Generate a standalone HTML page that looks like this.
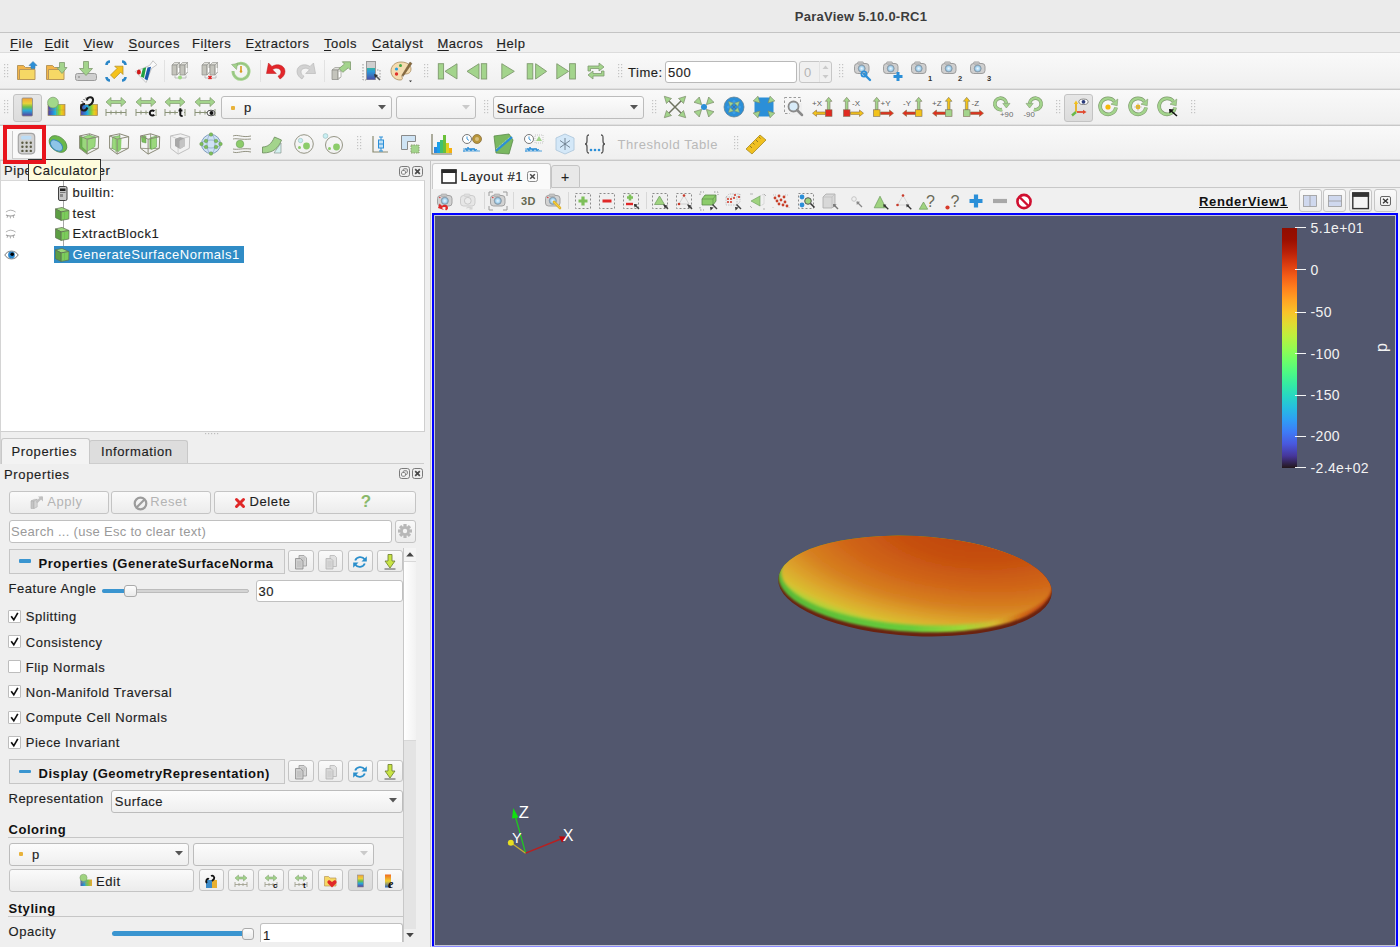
<!DOCTYPE html>
<html><head><meta charset="utf-8"><style>
html,body{margin:0;padding:0;}
body{width:1400px;height:947px;overflow:hidden;position:relative;background:#efefef;font-family:"Liberation Sans", sans-serif;}
div,svg{box-sizing:border-box;}
u{text-decoration:underline;text-decoration-thickness:1px;text-underline-offset:1.5px;}
</style></head><body>
<div style="position:absolute;left:0px;top:0px;width:1400px;height:32px;background:#ebebeb"></div><div style="position:absolute;left:0px;top:32px;width:1400px;height:1px;background:#c4c4c4"></div><div style="position:absolute;left:561px;width:600px;text-align:center;top:9.60px;height:13px;line-height:13px;font-size:13px;font-weight:bold;color:#3c3c3c;letter-spacing:0.25px;white-space:nowrap;">ParaView 5.10.0-RC1</div><div style="position:absolute;left:0px;top:33px;width:1400px;height:19px;background:#efefef"></div><div style="position:absolute;left:0px;top:52px;width:1400px;height:1px;background:#dcdcdc"></div><div style="position:absolute;left:10px;top:36.60px;height:13px;line-height:13px;font-size:13px;font-weight:normal;color:#1e1e1e;letter-spacing:0.55px;white-space:nowrap;-webkit-text-stroke:0.15px #1e1e1e;"><u>F</u>ile</div><div style="position:absolute;left:44.6px;top:36.60px;height:13px;line-height:13px;font-size:13px;font-weight:normal;color:#1e1e1e;letter-spacing:0.55px;white-space:nowrap;-webkit-text-stroke:0.15px #1e1e1e;"><u>E</u>dit</div><div style="position:absolute;left:83.5px;top:36.60px;height:13px;line-height:13px;font-size:13px;font-weight:normal;color:#1e1e1e;letter-spacing:0.55px;white-space:nowrap;-webkit-text-stroke:0.15px #1e1e1e;"><u>V</u>iew</div><div style="position:absolute;left:128.4px;top:36.60px;height:13px;line-height:13px;font-size:13px;font-weight:normal;color:#1e1e1e;letter-spacing:0.55px;white-space:nowrap;-webkit-text-stroke:0.15px #1e1e1e;"><u>S</u>ources</div><div style="position:absolute;left:192px;top:36.60px;height:13px;line-height:13px;font-size:13px;font-weight:normal;color:#1e1e1e;letter-spacing:0.55px;white-space:nowrap;-webkit-text-stroke:0.15px #1e1e1e;">Fi<u>l</u>ters</div><div style="position:absolute;left:245.4px;top:36.60px;height:13px;line-height:13px;font-size:13px;font-weight:normal;color:#1e1e1e;letter-spacing:0.55px;white-space:nowrap;-webkit-text-stroke:0.15px #1e1e1e;">E<u>x</u>tractors</div><div style="position:absolute;left:324px;top:36.60px;height:13px;line-height:13px;font-size:13px;font-weight:normal;color:#1e1e1e;letter-spacing:0.55px;white-space:nowrap;-webkit-text-stroke:0.15px #1e1e1e;"><u>T</u>ools</div><div style="position:absolute;left:372px;top:36.60px;height:13px;line-height:13px;font-size:13px;font-weight:normal;color:#1e1e1e;letter-spacing:0.55px;white-space:nowrap;-webkit-text-stroke:0.15px #1e1e1e;"><u>C</u>atalyst</div><div style="position:absolute;left:437.4px;top:36.60px;height:13px;line-height:13px;font-size:13px;font-weight:normal;color:#1e1e1e;letter-spacing:0.55px;white-space:nowrap;-webkit-text-stroke:0.15px #1e1e1e;"><u>M</u>acros</div><div style="position:absolute;left:496.5px;top:36.60px;height:13px;line-height:13px;font-size:13px;font-weight:normal;color:#1e1e1e;letter-spacing:0.55px;white-space:nowrap;-webkit-text-stroke:0.15px #1e1e1e;"><u>H</u>elp</div><div style="position:absolute;left:0px;top:53px;width:1400px;height:36px;background:linear-gradient(#f9f9f9,#efefef)"></div><div style="position:absolute;left:0px;top:88px;width:1400px;height:1px;background:#e0e0e0"></div><div style="position:absolute;left:0px;top:89px;width:1400px;height:1px;background:#c8c8c8"></div><div style="position:absolute;left:0px;top:90px;width:1400px;height:1px;background:#ffffff"></div><div style="position:absolute;left:0px;top:90px;width:1400px;height:35px;background:linear-gradient(#f9f9f9,#efefef)"></div><div style="position:absolute;left:0px;top:124px;width:1400px;height:1px;background:#e0e0e0"></div><div style="position:absolute;left:0px;top:125px;width:1400px;height:1px;background:#c8c8c8"></div><div style="position:absolute;left:0px;top:126px;width:1400px;height:1px;background:#ffffff"></div><div style="position:absolute;left:0px;top:126px;width:1400px;height:34px;background:linear-gradient(#f9f9f9,#efefef)"></div><div style="position:absolute;left:0px;top:159px;width:1400px;height:1px;background:#e0e0e0"></div><div style="position:absolute;left:0px;top:160px;width:1400px;height:1px;background:#c8c8c8"></div><div style="position:absolute;left:0px;top:161px;width:1400px;height:1px;background:#ffffff"></div><svg style="position:absolute;left:4px;top:64px" width="6" height="15" viewBox="0 0 6 15"><rect x="0" y="0" width="1.2" height="1.2" fill="#c4c4c4"/><rect x="3" y="0" width="1.2" height="1.2" fill="#c4c4c4"/><rect x="0" y="3" width="1.2" height="1.2" fill="#c4c4c4"/><rect x="3" y="3" width="1.2" height="1.2" fill="#c4c4c4"/><rect x="0" y="6" width="1.2" height="1.2" fill="#c4c4c4"/><rect x="3" y="6" width="1.2" height="1.2" fill="#c4c4c4"/><rect x="0" y="9" width="1.2" height="1.2" fill="#c4c4c4"/><rect x="3" y="9" width="1.2" height="1.2" fill="#c4c4c4"/><rect x="0" y="12" width="1.2" height="1.2" fill="#c4c4c4"/><rect x="3" y="12" width="1.2" height="1.2" fill="#c4c4c4"/></svg><svg style="position:absolute;left:14.5px;top:58.5px" width="24" height="24" viewBox="0 0 24 24"><path d="M2.5 20.5V6.5h6l2 2h9v12z" fill="#f3b54a" stroke="#b8975a"/><path d="M4.5 20.5V10.5h15.5v10z" fill="#f6d865" stroke="#b8975a"/><path d="M18 2.5l4 4h-2v3h-4v-3h-2z" fill="#2b8fd8" stroke="#3a7fb0" stroke-width="0.6"/></svg><svg style="position:absolute;left:44.0px;top:58.5px" width="24" height="24" viewBox="0 0 24 24"><path d="M2.5 20.5V6.5h6l2 2h9v12z" fill="#f3b54a" stroke="#b8975a"/><path d="M4.5 20.5V10.5h15.5v10z" fill="#f6d865" stroke="#b8975a"/><path d="M15.5 3.5h5v5h2.5l-5 6l-5-6h2.5z" fill="#a3d48c" stroke="#7f9a6e" stroke-width="0.8"/></svg><svg style="position:absolute;left:74.0px;top:58.5px" width="24" height="24" viewBox="0 0 24 24"><rect x="1.5" y="14.5" width="21" height="7" rx="2" fill="#cfcfcf" stroke="#9b9b9b"/><circle cx="5" cy="18" r="0.8" fill="#777"/><path d="M9.5 2.5h5v7h4l-6.5 7l-6.5-7h4z" fill="#a3d48c" stroke="#7f9a6e" stroke-width="0.8"/></svg><svg style="position:absolute;left:104.0px;top:58.5px" width="24" height="24" viewBox="0 0 24 24"><path d="M2.5 6A3.5 3.5 0 0 1 6 2.5M18 2.5A3.5 3.5 0 0 1 21.5 6M21.5 18A3.5 3.5 0 0 1 18 21.5M6 21.5A3.5 3.5 0 0 1 2.5 18" fill="none" stroke="#2a86c8" stroke-width="2.6"/><path d="M6.5 16l6.5-6.5l-2.3-2.3h8.3v8.3l-2.3-2.3l-6.5 6.5z" fill="#f5c21b" stroke="#b08a20" stroke-width="0.7"/></svg><svg style="position:absolute;left:134.0px;top:58.5px" width="24" height="24" viewBox="0 0 24 24"><path d="M1.3 12.5L12 23.5L17.5 9.5L22.8 5.8L19 1.8L15.5 6.5z" fill="#fafafa" stroke="#c0c0c0" stroke-width="0.9"/><ellipse cx="4.9" cy="13" rx="2" ry="2.6" fill="#d01818"/><path d="M8.8 9.5l3.4-1.2l-2.2 10.6l-3.2-1.5z" fill="#20a040"/><path d="M13.5 8.5l3.6-0.8l-3.6 13.5l-3-1.3z" fill="#1a58a8"/></svg><div style="position:absolute;left:164px;top:60px;width:1px;height:22px;background:#e2e2e2"></div><svg style="position:absolute;left:169.0px;top:58.5px" width="24" height="24" viewBox="0 0 24 24"><path d="M3 6l2.5-2.5h5l-2.5 2.5z" fill="#e2e2dc" stroke="#8f8f8a" stroke-width="0.6"/><path d="M3 6h5v10h-5z" fill="#c4c4bc" stroke="#8f8f8a" stroke-width="0.7"/><path d="M8 6l2.5-2.5v10l-2.5 2.5z" fill="#dcdcd6" stroke="#8f8f8a" stroke-width="0.6"/><path d="M9 9h1.5v4H9z" fill="#fff"/><path d="M11 6l2.5-2.5h5l-2.5 2.5z" fill="#e2e2dc" stroke="#8f8f8a" stroke-width="0.6"/><path d="M11 6h5v10h-5z" fill="#c4c4bc" stroke="#8f8f8a" stroke-width="0.7"/><path d="M16 6l2.5-2.5v10l-2.5 2.5z" fill="#dcdcd6" stroke="#8f8f8a" stroke-width="0.6"/><path d="M17 9h1.5v4H17z" fill="#fff"/><path d="M6 16.5v2.5h11v-2.5" fill="none" stroke="#b8b8b8" stroke-width="0.9"/><circle cx="11" cy="18.5" r="2" fill="#9ed883"/></svg><svg style="position:absolute;left:199.0px;top:58.5px" width="24" height="24" viewBox="0 0 24 24"><path d="M3 6l2.5-2.5h5l-2.5 2.5z" fill="#e2e2dc" stroke="#8f8f8a" stroke-width="0.6"/><path d="M3 6h5v10h-5z" fill="#c4c4bc" stroke="#8f8f8a" stroke-width="0.7"/><path d="M8 6l2.5-2.5v10l-2.5 2.5z" fill="#dcdcd6" stroke="#8f8f8a" stroke-width="0.6"/><path d="M9 9h1.5v4H9z" fill="#fff"/><path d="M11 6l2.5-2.5h5l-2.5 2.5z" fill="#e2e2dc" stroke="#8f8f8a" stroke-width="0.6"/><path d="M11 6h5v10h-5z" fill="#c4c4bc" stroke="#8f8f8a" stroke-width="0.7"/><path d="M16 6l2.5-2.5v10l-2.5 2.5z" fill="#dcdcd6" stroke="#8f8f8a" stroke-width="0.6"/><path d="M17 9h1.5v4H17z" fill="#fff"/><path d="M6 16.5v2.5h11v-2.5" fill="none" stroke="#b8b8b8" stroke-width="0.9"/><path d="M9.5 17l3 3M12.5 17l-3 3" stroke="#e02020" stroke-width="1.6"/></svg><svg style="position:absolute;left:229.0px;top:58.5px" width="24" height="24" viewBox="0 0 24 24"><path d="M6.5 6.5A8 8 0 1 1 4 12" fill="none" stroke="#a3d48c" stroke-width="3"/><path d="M6.5 6.5A8 8 0 1 1 4 12" fill="none" stroke="#7f9a6e" stroke-width="0.4"/><path d="M2.5 5.5l6 -1l-1 6z" fill="#a3d48c" stroke="#7f9a6e" stroke-width="0.5"/><path d="M12 7v5" stroke="#d99a20" stroke-width="1.6"/><circle cx="12" cy="12.5" r="1.3" fill="#d99a20"/></svg><div style="position:absolute;left:260px;top:60px;width:1px;height:22px;background:#e2e2e2"></div><svg style="position:absolute;left:264.0px;top:58.5px" width="24" height="24" viewBox="0 0 24 24"><path d="M2.5 14.5L4.5 4l3.5 3.5c5-3.5 13-1.5 13 5c0 3.5-2.5 6-5 7.5l-2-2.8c1.8-1 3-2.5 3-4.3c0-3.5-5-5-8.5-2.2l3.8 3.8z" fill="#e3262b" stroke="#b81818" stroke-width="0.5"/></svg><svg style="position:absolute;left:294.0px;top:58.5px" width="24" height="24" viewBox="0 0 24 24"><path d="M21.5 14.5L19.5 4l-3.5 3.5c-5-3.5-13-1.5-13 5c0 3.5 2.5 6 5 7.5l2-2.8c-1.8-1-3-2.5-3-4.3c0-3.5 5-5 8.5-2.2l-3.8 3.8z" fill="#d2d2d2" stroke="#b4b4b4" stroke-width="0.6"/></svg><div style="position:absolute;left:324px;top:60px;width:1px;height:22px;background:#e2e2e2"></div><svg style="position:absolute;left:329.0px;top:58.5px" width="24" height="24" viewBox="0 0 24 24"><path d="M3 11l3-2.5h6l-3 2.5z" fill="#e0e0da" stroke="#8a8a84" stroke-width="0.6"/><path d="M3 11h6v9.5h-6z" fill="#c4c4bc" stroke="#8a8a84" stroke-width="0.7"/><path d="M9 11l3-2.5v9.5l-3 2.5z" fill="#dadad4" stroke="#8a8a84" stroke-width="0.6"/><rect x="9.8" y="13" width="1.6" height="5" fill="#fff"/><path d="M10 9.5l5.5-4.5l-2.2-2.2h8.2v8.2l-2.2-2.2l-5.5 4.5z" fill="#a3d48c" stroke="#7f9a6e" stroke-width="0.8"/></svg><svg style="position:absolute;left:359.0px;top:58.5px" width="24" height="24" viewBox="0 0 24 24"><rect x="7.5" y="2.5" width="9" height="18" fill="#cfcfcf" stroke="#9a9a9a"/><rect x="8" y="9" width="8" height="11.5" fill="url(#tank)"/><path d="M4 5v16h3M18 11h3v8" fill="none" stroke="#999" stroke-dasharray="1.5 1.5"/><path d="M16 16l5 5" stroke="#555" stroke-width="1.6"/><path d="M15 15l4 1l-3 3z" fill="#333"/><defs><linearGradient id="tank" x1="0" y1="0" x2="0" y2="1"><stop offset="0" stop-color="#36b3a0"/><stop offset="0.3" stop-color="#2d9ad8"/><stop offset="1" stop-color="#4a4fa8"/></linearGradient></defs></svg><svg style="position:absolute;left:389.0px;top:58.5px" width="24" height="24" viewBox="0 0 24 24"><path d="M12 3c-6 0-10 4-10 9c0 5 4 9 9 9c2 0 3-1 2-3c-1-2 1-3 3-3c3 0 6-1 6-5c0-4-4-7-10-7z" fill="#f4dcb0" stroke="#a88a5a" stroke-width="0.8"/><circle cx="7.5" cy="10" r="1.6" fill="#2b9fe0"/><circle cx="11.5" cy="6.5" r="1.5" fill="#44a844"/><circle cx="7.5" cy="15" r="1.7" fill="#e0302a"/><path d="M21 3l-8 13l1 1.5l9-13z" fill="#8a6a3a" stroke="#6a5a40" stroke-width="0.5"/><path d="M20 21.5l3 0l-1.5 1.8z" fill="#333"/></svg><svg style="position:absolute;left:424px;top:64px" width="6" height="15" viewBox="0 0 6 15"><rect x="0" y="0" width="1.2" height="1.2" fill="#c4c4c4"/><rect x="3" y="0" width="1.2" height="1.2" fill="#c4c4c4"/><rect x="0" y="3" width="1.2" height="1.2" fill="#c4c4c4"/><rect x="3" y="3" width="1.2" height="1.2" fill="#c4c4c4"/><rect x="0" y="6" width="1.2" height="1.2" fill="#c4c4c4"/><rect x="3" y="6" width="1.2" height="1.2" fill="#c4c4c4"/><rect x="0" y="9" width="1.2" height="1.2" fill="#c4c4c4"/><rect x="3" y="9" width="1.2" height="1.2" fill="#c4c4c4"/><rect x="0" y="12" width="1.2" height="1.2" fill="#c4c4c4"/><rect x="3" y="12" width="1.2" height="1.2" fill="#c4c4c4"/></svg><svg style="position:absolute;left:435.0px;top:58.5px" width="24" height="24" viewBox="0 0 24 24"><rect x="3.3" y="4.7" width="5.3" height="15.3" fill="#a3d48c" stroke="#7f9a6e" stroke-width="0.9"/><path d="M10 12.35l12-7.6v15.2z" fill="#a3d48c" stroke="#7f9a6e" stroke-width="0.9"/></svg><svg style="position:absolute;left:465.0px;top:58.5px" width="24" height="24" viewBox="0 0 24 24"><path d="M2 12.35l12-7.6v15.2z" fill="#a3d48c" stroke="#7f9a6e" stroke-width="0.9"/><rect x="16.3" y="4.7" width="5.4" height="15.3" fill="#a3d48c" stroke="#7f9a6e" stroke-width="0.9"/></svg><svg style="position:absolute;left:496.0px;top:58.5px" width="24" height="24" viewBox="0 0 24 24"><path d="M5.8 4.7l12.5 7.65l-12.5 7.65z" fill="#a3d48c" stroke="#7f9a6e" stroke-width="0.9"/></svg><svg style="position:absolute;left:525.0px;top:58.5px" width="24" height="24" viewBox="0 0 24 24"><rect x="2.2" y="4.7" width="5.6" height="15.3" fill="#a3d48c" stroke="#7f9a6e" stroke-width="0.9"/><path d="M10.6 4.7l11 7.65l-11 7.65z" fill="#a3d48c" stroke="#7f9a6e" stroke-width="0.9"/></svg><svg style="position:absolute;left:554.0px;top:58.5px" width="24" height="24" viewBox="0 0 24 24"><path d="M2.8 4.7l11.8 7.65l-11.8 7.65z" fill="#a3d48c" stroke="#7f9a6e" stroke-width="0.9"/><rect x="15.6" y="4.7" width="5.8" height="15.3" fill="#a3d48c" stroke="#7f9a6e" stroke-width="0.9"/></svg><svg style="position:absolute;left:584.0px;top:58.5px" width="24" height="24" viewBox="0 0 24 24"><path d="M4 12V7h11V4l5 4l-5 4V9.5H6.5V12z" fill="#a3d48c" stroke="#7f9a6e" stroke-width="0.8"/><path d="M20 12v5H9v3l-5-4l5-4v2.5h8.5V12z" fill="#a3d48c" stroke="#7f9a6e" stroke-width="0.8"/></svg><svg style="position:absolute;left:618px;top:64px" width="6" height="15" viewBox="0 0 6 15"><rect x="0" y="0" width="1.2" height="1.2" fill="#c4c4c4"/><rect x="3" y="0" width="1.2" height="1.2" fill="#c4c4c4"/><rect x="0" y="3" width="1.2" height="1.2" fill="#c4c4c4"/><rect x="3" y="3" width="1.2" height="1.2" fill="#c4c4c4"/><rect x="0" y="6" width="1.2" height="1.2" fill="#c4c4c4"/><rect x="3" y="6" width="1.2" height="1.2" fill="#c4c4c4"/><rect x="0" y="9" width="1.2" height="1.2" fill="#c4c4c4"/><rect x="3" y="9" width="1.2" height="1.2" fill="#c4c4c4"/><rect x="0" y="12" width="1.2" height="1.2" fill="#c4c4c4"/><rect x="3" y="12" width="1.2" height="1.2" fill="#c4c4c4"/></svg><div style="position:absolute;left:628px;top:65.75px;height:13px;line-height:13px;font-size:13px;font-weight:normal;color:#1e1e1e;letter-spacing:0.55px;white-space:nowrap;-webkit-text-stroke:0.15px #1e1e1e;">Time:</div><div style="position:absolute;left:664.5px;top:60.5px;width:132px;height:22px;background:#fff;border:1px solid #b9b9b9;border-radius:3px"></div><div style="position:absolute;left:668px;top:65.75px;height:13px;line-height:13px;font-size:13px;font-weight:normal;color:#1e1e1e;letter-spacing:0.5px;white-space:nowrap;-webkit-text-stroke:0.15px #1e1e1e;">500</div><div style="position:absolute;left:798.5px;top:60.5px;width:33px;height:22px;background:#f0f0f0;border:1px solid #c6c6c6;border-radius:3px"></div><div style="position:absolute;left:819px;top:61px;width:1px;height:21px;background:#e2e2e2"></div><div style="position:absolute;left:804px;top:65.75px;height:13px;line-height:13px;font-size:13px;font-weight:normal;color:#b4b4b4;letter-spacing:0px;white-space:nowrap;">0</div><svg style="position:absolute;left:820px;top:62px" width="11" height="20" viewBox="0 0 11 20"><path d="M2.5 7l3-3.5L8.5 7z" fill="#cacaca"/><path d="M2.5 13l3 3.5L8.5 13z" fill="#cacaca"/></svg><svg style="position:absolute;left:839px;top:64px" width="6" height="15" viewBox="0 0 6 15"><rect x="0" y="0" width="1.2" height="1.2" fill="#c4c4c4"/><rect x="3" y="0" width="1.2" height="1.2" fill="#c4c4c4"/><rect x="0" y="3" width="1.2" height="1.2" fill="#c4c4c4"/><rect x="3" y="3" width="1.2" height="1.2" fill="#c4c4c4"/><rect x="0" y="6" width="1.2" height="1.2" fill="#c4c4c4"/><rect x="3" y="6" width="1.2" height="1.2" fill="#c4c4c4"/><rect x="0" y="9" width="1.2" height="1.2" fill="#c4c4c4"/><rect x="3" y="9" width="1.2" height="1.2" fill="#c4c4c4"/><rect x="0" y="12" width="1.2" height="1.2" fill="#c4c4c4"/><rect x="3" y="12" width="1.2" height="1.2" fill="#c4c4c4"/></svg><svg style="position:absolute;left:851.0px;top:58.5px" width="24" height="24" viewBox="0 0 24 24"><g transform="translate(2,-1)"><defs><radialGradient id="lens1"><stop offset="0" stop-color="#eef8ff"/><stop offset="0.6" stop-color="#a8d4f0"/><stop offset="1" stop-color="#7a9ab0"/></radialGradient></defs><rect x="1.5" y="5.5" width="14.5" height="10" rx="3" fill="#cfcfcf" stroke="#959595" stroke-width="0.9"/><rect x="4.5" y="3.8" width="6" height="2.5" rx="1" fill="#c0c0c0" stroke="#9e9e9e" stroke-width="0.6"/><circle cx="8.7" cy="10.5" r="3.5" fill="url(#lens1)" stroke="#8a9aa8" stroke-width="0.8"/></g><path d="M13 15l6 6" stroke="#2b8fd8" stroke-width="2.4" stroke-linecap="round"/><circle cx="13" cy="15" r="2.6" fill="none" stroke="#2b8fd8" stroke-width="1.8"/></svg><svg style="position:absolute;left:880.0px;top:58.5px" width="24" height="24" viewBox="0 0 24 24"><g transform="translate(2,-1)"><defs><radialGradient id="lens1"><stop offset="0" stop-color="#eef8ff"/><stop offset="0.6" stop-color="#a8d4f0"/><stop offset="1" stop-color="#7a9ab0"/></radialGradient></defs><rect x="1.5" y="5.5" width="14.5" height="10" rx="3" fill="#cfcfcf" stroke="#959595" stroke-width="0.9"/><rect x="4.5" y="3.8" width="6" height="2.5" rx="1" fill="#c0c0c0" stroke="#9e9e9e" stroke-width="0.6"/><circle cx="8.7" cy="10.5" r="3.5" fill="url(#lens1)" stroke="#8a9aa8" stroke-width="0.8"/></g><path d="M18 13v9M13.5 17.5h9" stroke="#2b8fd8" stroke-width="3"/></svg><svg style="position:absolute;left:909.0px;top:58.5px" width="24" height="24" viewBox="0 0 24 24"><g transform="translate(1,-1)"><defs><radialGradient id="lens1"><stop offset="0" stop-color="#eef8ff"/><stop offset="0.6" stop-color="#a8d4f0"/><stop offset="1" stop-color="#7a9ab0"/></radialGradient></defs><rect x="1.5" y="5.5" width="14.5" height="10" rx="3" fill="#cfcfcf" stroke="#959595" stroke-width="0.9"/><rect x="4.5" y="3.8" width="6" height="2.5" rx="1" fill="#c0c0c0" stroke="#9e9e9e" stroke-width="0.6"/><circle cx="8.7" cy="10.5" r="3.5" fill="url(#lens1)" stroke="#8a9aa8" stroke-width="0.8"/></g><text x="19" y="21.5" font-family="Liberation Sans" font-weight="bold" font-size="7.5" fill="#333">1</text></svg><svg style="position:absolute;left:939.0px;top:58.5px" width="24" height="24" viewBox="0 0 24 24"><g transform="translate(1,-1)"><defs><radialGradient id="lens1"><stop offset="0" stop-color="#eef8ff"/><stop offset="0.6" stop-color="#a8d4f0"/><stop offset="1" stop-color="#7a9ab0"/></radialGradient></defs><rect x="1.5" y="5.5" width="14.5" height="10" rx="3" fill="#cfcfcf" stroke="#959595" stroke-width="0.9"/><rect x="4.5" y="3.8" width="6" height="2.5" rx="1" fill="#c0c0c0" stroke="#9e9e9e" stroke-width="0.6"/><circle cx="8.7" cy="10.5" r="3.5" fill="url(#lens1)" stroke="#8a9aa8" stroke-width="0.8"/></g><text x="19" y="21.5" font-family="Liberation Sans" font-weight="bold" font-size="7.5" fill="#333">2</text></svg><svg style="position:absolute;left:968.0px;top:58.5px" width="24" height="24" viewBox="0 0 24 24"><g transform="translate(1,-1)"><defs><radialGradient id="lens1"><stop offset="0" stop-color="#eef8ff"/><stop offset="0.6" stop-color="#a8d4f0"/><stop offset="1" stop-color="#7a9ab0"/></radialGradient></defs><rect x="1.5" y="5.5" width="14.5" height="10" rx="3" fill="#cfcfcf" stroke="#959595" stroke-width="0.9"/><rect x="4.5" y="3.8" width="6" height="2.5" rx="1" fill="#c0c0c0" stroke="#9e9e9e" stroke-width="0.6"/><circle cx="8.7" cy="10.5" r="3.5" fill="url(#lens1)" stroke="#8a9aa8" stroke-width="0.8"/></g><text x="19" y="21.5" font-family="Liberation Sans" font-weight="bold" font-size="7.5" fill="#333">3</text></svg><svg style="position:absolute;left:4px;top:100px" width="6" height="15" viewBox="0 0 6 15"><rect x="0" y="0" width="1.2" height="1.2" fill="#c4c4c4"/><rect x="3" y="0" width="1.2" height="1.2" fill="#c4c4c4"/><rect x="0" y="3" width="1.2" height="1.2" fill="#c4c4c4"/><rect x="3" y="3" width="1.2" height="1.2" fill="#c4c4c4"/><rect x="0" y="6" width="1.2" height="1.2" fill="#c4c4c4"/><rect x="3" y="6" width="1.2" height="1.2" fill="#c4c4c4"/><rect x="0" y="9" width="1.2" height="1.2" fill="#c4c4c4"/><rect x="3" y="9" width="1.2" height="1.2" fill="#c4c4c4"/><rect x="0" y="12" width="1.2" height="1.2" fill="#c4c4c4"/><rect x="3" y="12" width="1.2" height="1.2" fill="#c4c4c4"/></svg><div style="position:absolute;left:12.5px;top:93.5px;width:29px;height:28px;background:linear-gradient(#e6e6e6,#dcdcdc);border:1px solid #c3c3c3;border-radius:3px"></div><svg style="position:absolute;left:14.7px;top:95.0px" width="24" height="24" viewBox="0 0 24 24"><defs><linearGradient id="cbg" x1="0" y1="0" x2="0" y2="1"><stop offset="0" stop-color="#f4a13a"/><stop offset="0.3" stop-color="#e8d23a"/><stop offset="0.5" stop-color="#6cc04a"/><stop offset="0.7" stop-color="#2aa8d8"/><stop offset="1" stop-color="#5a3c9a"/></linearGradient></defs><rect x="7" y="3" width="10.5" height="18" rx="1" fill="url(#cbg)" stroke="#8a8a8a" stroke-width="0.8"/></svg><svg style="position:absolute;left:44.5px;top:95.0px" width="24" height="24" viewBox="0 0 24 24"><defs><linearGradient id="grd" x1="0" y1="0" x2="1" y2="0"><stop offset="0" stop-color="#5a3c9c"/><stop offset="0.28" stop-color="#2a86d6"/><stop offset="0.45" stop-color="#22bcd8"/><stop offset="0.62" stop-color="#78d040"/><stop offset="0.8" stop-color="#e6d01e"/><stop offset="1" stop-color="#f0a028"/></linearGradient></defs><rect x="3" y="9.5" width="17" height="11" fill="url(#grd)" stroke="#9a8a58" stroke-width="0.7"/><path d="M3 15h17M11.5 9.5v11" stroke="#a89048" stroke-width="0.5" stroke-opacity="0.7"/><circle cx="8" cy="7.6" r="5.4" fill="#a2d88a" stroke="#7a9a6a" stroke-width="0.7"/></svg><svg style="position:absolute;left:74.5px;top:95.0px" width="24" height="24" viewBox="0 0 24 24"><defs><linearGradient id="grd2" x1="0" y1="0" x2="1" y2="0"><stop offset="0" stop-color="#5a3c9c"/><stop offset="0.28" stop-color="#2a86d6"/><stop offset="0.45" stop-color="#22bcd8"/><stop offset="0.62" stop-color="#78d040"/><stop offset="0.8" stop-color="#e6d01e"/><stop offset="1" stop-color="#f0a028"/></linearGradient></defs><rect x="5.5" y="9.5" width="17" height="11" fill="url(#grd2)" stroke="#9a8a58" stroke-width="0.7"/><path d="M5.5 15h17M14 9.5v11" stroke="#a89048" stroke-width="0.5" stroke-opacity="0.7"/><path d="M13.5 10.5C19 9 19.5 2 15 2.2C13 2.3 11.8 3.8 12 5.5M10 9C5.5 8.5 4.5 15 8.5 15.5C10.5 15.8 11.8 14 12.5 12.5" fill="none" stroke="#1a1a1a" stroke-width="2.1"/><path d="M8.5 4l1.5 1.5M6.5 6.5l2 .8M11 2.5l.3 2" stroke="#333" stroke-width="0.9"/></svg><svg style="position:absolute;left:104.3px;top:95.0px" width="24" height="24" viewBox="0 0 24 24"><path d="M2 7l5-4.5v3h10v-3l5 4.5l-5 4.5v-3H7v3z" fill="#a3d48c" stroke="#7f9a6e" stroke-width="0.7"/><path d="M2 14v7M2 17.5h20M22 14v7M7 15.5v4M12 15.5v4M17 15.5v4" stroke="#8a9278" stroke-width="1"/></svg><svg style="position:absolute;left:133.8px;top:95.0px" width="24" height="24" viewBox="0 0 24 24"><path d="M2 7l5-4.5v3h10v-3l5 4.5l-5 4.5v-3H7v3z" fill="#a3d48c" stroke="#7f9a6e" stroke-width="0.7"/><path d="M2 14v7M2 17.5h20M22 14v7M7 15.5v4M12 15.5v4M17 15.5v4" stroke="#8a9278" stroke-width="1"/><circle cx="18" cy="18" r="3.6" fill="#f2f2f2"/><path d="M20.3 16.2A2.6 2.6 0 1 0 20.3 19.8" fill="none" stroke="#151515" stroke-width="2"/></svg><svg style="position:absolute;left:163.3px;top:95.0px" width="24" height="24" viewBox="0 0 24 24"><path d="M2 7l5-4.5v3h10v-3l5 4.5l-5 4.5v-3H7v3z" fill="#a3d48c" stroke="#7f9a6e" stroke-width="0.7"/><path d="M2 14v7M2 17.5h20M22 14v7M7 15.5v4M12 15.5v4M17 15.5v4" stroke="#8a9278" stroke-width="1"/><rect x="15" y="13" width="6" height="9" fill="#f2f2f2"/><path d="M17.3 13.2v6.3c0 1.2 .8 1.6 2.3 1.5M15.6 15.6h3.8" fill="none" stroke="#151515" stroke-width="2"/></svg><svg style="position:absolute;left:193.3px;top:95.0px" width="24" height="24" viewBox="0 0 24 24"><path d="M2 7l5-4.5v3h10v-3l5 4.5l-5 4.5v-3H7v3z" fill="#a3d48c" stroke="#7f9a6e" stroke-width="0.7"/><path d="M2 14v7M2 17.5h20M22 14v7M7 15.5v4M12 15.5v4M17 15.5v4" stroke="#8a9278" stroke-width="1"/><ellipse cx="18" cy="18" rx="4" ry="2.8" fill="#fff" stroke="#222" stroke-width="0.8"/><circle cx="18.5" cy="18" r="2" fill="#111"/></svg><div style="position:absolute;left:220.5px;top:96px;width:171.0px;height:23px;background:linear-gradient(#fcfcfc,#efefef);border:1px solid #bcbcbc;border-radius:3px"></div><svg style="position:absolute;left:377.5px;top:104.5px" width="8" height="5" viewBox="0 0 8 5"><path d="M0 0h8l-4 4.5z" fill="#555"/></svg><div style="position:absolute;left:231.0px;top:105.5px;width:4px;height:4px;background:#e8b23a;border-radius:1px"></div><div style="position:absolute;left:244.0px;top:101.30px;height:13px;line-height:13px;font-size:13px;font-weight:normal;color:#1e1e1e;letter-spacing:0.5px;white-space:nowrap;-webkit-text-stroke:0.15px #1e1e1e;">p</div><div style="position:absolute;left:396px;top:96px;width:79.5px;height:23px;background:linear-gradient(#fcfcfc,#efefef);border:1px solid #bcbcbc;border-radius:3px"></div><svg style="position:absolute;left:461.5px;top:104.5px" width="8" height="5" viewBox="0 0 8 5"><path d="M0 0h8l-4 4.5z" fill="#cacaca"/></svg><svg style="position:absolute;left:484px;top:100px" width="6" height="15" viewBox="0 0 6 15"><rect x="0" y="0" width="1.2" height="1.2" fill="#c4c4c4"/><rect x="3" y="0" width="1.2" height="1.2" fill="#c4c4c4"/><rect x="0" y="3" width="1.2" height="1.2" fill="#c4c4c4"/><rect x="3" y="3" width="1.2" height="1.2" fill="#c4c4c4"/><rect x="0" y="6" width="1.2" height="1.2" fill="#c4c4c4"/><rect x="3" y="6" width="1.2" height="1.2" fill="#c4c4c4"/><rect x="0" y="9" width="1.2" height="1.2" fill="#c4c4c4"/><rect x="3" y="9" width="1.2" height="1.2" fill="#c4c4c4"/><rect x="0" y="12" width="1.2" height="1.2" fill="#c4c4c4"/><rect x="3" y="12" width="1.2" height="1.2" fill="#c4c4c4"/></svg><div style="position:absolute;left:492.5px;top:96px;width:151.0px;height:23px;background:linear-gradient(#fcfcfc,#efefef);border:1px solid #bcbcbc;border-radius:3px"></div><svg style="position:absolute;left:629.5px;top:104.5px" width="8" height="5" viewBox="0 0 8 5"><path d="M0 0h8l-4 4.5z" fill="#555"/></svg><div style="position:absolute;left:496.8px;top:102.10px;height:13px;line-height:13px;font-size:13px;font-weight:normal;color:#1e1e1e;letter-spacing:0.5px;white-space:nowrap;-webkit-text-stroke:0.15px #1e1e1e;">Surface</div><svg style="position:absolute;left:652px;top:100px" width="6" height="15" viewBox="0 0 6 15"><rect x="0" y="0" width="1.2" height="1.2" fill="#c4c4c4"/><rect x="3" y="0" width="1.2" height="1.2" fill="#c4c4c4"/><rect x="0" y="3" width="1.2" height="1.2" fill="#c4c4c4"/><rect x="3" y="3" width="1.2" height="1.2" fill="#c4c4c4"/><rect x="0" y="6" width="1.2" height="1.2" fill="#c4c4c4"/><rect x="3" y="6" width="1.2" height="1.2" fill="#c4c4c4"/><rect x="0" y="9" width="1.2" height="1.2" fill="#c4c4c4"/><rect x="3" y="9" width="1.2" height="1.2" fill="#c4c4c4"/><rect x="0" y="12" width="1.2" height="1.2" fill="#c4c4c4"/><rect x="3" y="12" width="1.2" height="1.2" fill="#c4c4c4"/></svg><svg style="position:absolute;left:663.0px;top:95.0px" width="24" height="24" viewBox="0 0 24 24"><path d="M4 4L20 20M20 4L4 20" stroke="#6f7360" stroke-width="1.5"/><g transform="translate(1.3 1.3) rotate(0)"><path d="M0 0L7.2 2.2L4.6 4.6L2.2 7.2Z" fill="#a3d48c" stroke="#7a8a68" stroke-width="0.7" stroke-linejoin="round"/></g><g transform="translate(22.7 1.3) rotate(90)"><path d="M0 0L7.2 2.2L4.6 4.6L2.2 7.2Z" fill="#a3d48c" stroke="#7a8a68" stroke-width="0.7" stroke-linejoin="round"/></g><g transform="translate(22.7 22.7) rotate(180)"><path d="M0 0L7.2 2.2L4.6 4.6L2.2 7.2Z" fill="#a3d48c" stroke="#7a8a68" stroke-width="0.7" stroke-linejoin="round"/></g><g transform="translate(1.3 22.7) rotate(270)"><path d="M0 0L7.2 2.2L4.6 4.6L2.2 7.2Z" fill="#a3d48c" stroke="#7a8a68" stroke-width="0.7" stroke-linejoin="round"/></g></svg><svg style="position:absolute;left:692.3px;top:95.0px" width="24" height="24" viewBox="0 0 24 24"><circle cx="12" cy="12" r="3" fill="#2b8fd8"/><g transform="translate(9.6 9.6) rotate(180) scale(1.05)"><path d="M0 0L7.2 2.2L4.6 4.6L2.2 7.2Z" fill="#a3d48c" stroke="#7a8a68" stroke-width="0.7" stroke-linejoin="round"/></g><g transform="translate(14.4 9.6) rotate(270) scale(1.05)"><path d="M0 0L7.2 2.2L4.6 4.6L2.2 7.2Z" fill="#a3d48c" stroke="#7a8a68" stroke-width="0.7" stroke-linejoin="round"/></g><g transform="translate(14.4 14.4) rotate(0) scale(1.05)"><path d="M0 0L7.2 2.2L4.6 4.6L2.2 7.2Z" fill="#a3d48c" stroke="#7a8a68" stroke-width="0.7" stroke-linejoin="round"/></g><g transform="translate(9.6 14.4) rotate(90) scale(1.05)"><path d="M0 0L7.2 2.2L4.6 4.6L2.2 7.2Z" fill="#a3d48c" stroke="#7a8a68" stroke-width="0.7" stroke-linejoin="round"/></g></svg><svg style="position:absolute;left:722.2px;top:95.0px" width="24" height="24" viewBox="0 0 24 24"><circle cx="12" cy="12" r="10" fill="#2b8fd8" stroke="#5a7a8a" stroke-width="0.7"/><path d="M7 7L17 17M17 7L7 17" stroke="#4a7090" stroke-width="0.8"/><circle cx="12" cy="6.5" r="1.5" fill="#3aa0e8"/><circle cx="12" cy="17.5" r="1.5" fill="#3aa0e8"/><circle cx="6.5" cy="12" r="1.5" fill="#3aa0e8"/><circle cx="17.5" cy="12" r="1.5" fill="#3aa0e8"/><g transform="translate(6.5 6.5) rotate(0) scale(0.7)"><path d="M0 0L7.2 2.2L4.6 4.6L2.2 7.2Z" fill="#a3d48c" stroke="#7a8a68" stroke-width="0.7" stroke-linejoin="round"/></g><g transform="translate(17.5 6.5) rotate(90) scale(0.7)"><path d="M0 0L7.2 2.2L4.6 4.6L2.2 7.2Z" fill="#a3d48c" stroke="#7a8a68" stroke-width="0.7" stroke-linejoin="round"/></g><g transform="translate(17.5 17.5) rotate(180) scale(0.7)"><path d="M0 0L7.2 2.2L4.6 4.6L2.2 7.2Z" fill="#a3d48c" stroke="#7a8a68" stroke-width="0.7" stroke-linejoin="round"/></g><g transform="translate(6.5 17.5) rotate(270) scale(0.7)"><path d="M0 0L7.2 2.2L4.6 4.6L2.2 7.2Z" fill="#a3d48c" stroke="#7a8a68" stroke-width="0.7" stroke-linejoin="round"/></g></svg><svg style="position:absolute;left:752.0px;top:95.0px" width="24" height="24" viewBox="0 0 24 24"><rect x="2.5" y="2.5" width="19" height="19" rx="4.5" fill="#2b8fd8"/><g transform="translate(8 8) rotate(180) scale(0.95)"><path d="M0 0L7.2 2.2L4.6 4.6L2.2 7.2Z" fill="#a3d48c" stroke="#7a8a68" stroke-width="0.7" stroke-linejoin="round"/></g><g transform="translate(16 8) rotate(270) scale(0.95)"><path d="M0 0L7.2 2.2L4.6 4.6L2.2 7.2Z" fill="#a3d48c" stroke="#7a8a68" stroke-width="0.7" stroke-linejoin="round"/></g><g transform="translate(16 16) rotate(0) scale(0.95)"><path d="M0 0L7.2 2.2L4.6 4.6L2.2 7.2Z" fill="#a3d48c" stroke="#7a8a68" stroke-width="0.7" stroke-linejoin="round"/></g><g transform="translate(8 16) rotate(90) scale(0.95)"><path d="M0 0L7.2 2.2L4.6 4.6L2.2 7.2Z" fill="#a3d48c" stroke="#7a8a68" stroke-width="0.7" stroke-linejoin="round"/></g></svg><svg style="position:absolute;left:781.8px;top:95.0px" width="24" height="24" viewBox="0 0 24 24"><rect x="2.5" y="2.5" width="16" height="16" fill="none" stroke="#9a9a9a" stroke-dasharray="2.5 2"/><rect x="8" y="8" width="12" height="12" fill="#efefef"/><circle cx="11.5" cy="11.5" r="5" fill="#d8ecfa" stroke="#8a8a8a" stroke-width="1.8"/><path d="M15 15l5 5" stroke="#8a8a8a" stroke-width="2.5" stroke-linecap="round"/></svg><svg style="position:absolute;left:811.3px;top:95.0px" width="24" height="24" viewBox="0 0 24 24"><path d="M17.7 2.3l3.3 4h-2v8.5h-2.6v-8.5h-2z" fill="#a3d48c" stroke="#7a7a60" stroke-width="0.6"/><path d="M1.5 18.2l4-3.2v2h9v2.4h-9v2z" fill="#f2c21a" stroke="#8a6a40" stroke-width="0.6"/><rect x="14.5" y="14.8" width="6.5" height="6.5" fill="#e02a20" stroke="#7a6a50" stroke-width="0.6"/><text x="1" y="11.3" font-family="Liberation Sans" font-size="8" fill="#5a5a5a">+X</text></svg><svg style="position:absolute;left:841.0px;top:95.0px" width="24" height="24" viewBox="0 0 24 24"><path d="M5.7 2.3l3.3 4h-2v8.5h-2.6v-8.5h-2z" fill="#a3d48c" stroke="#7a7a60" stroke-width="0.6"/><path d="M22.5 18.2l-4-3.2v2h-9v2.4h9v2z" fill="#f2c21a" stroke="#8a6a40" stroke-width="0.6"/><rect x="2.5" y="14.8" width="6.5" height="6.5" fill="#e02a20" stroke="#7a6a50" stroke-width="0.6"/><text x="11" y="11.3" font-family="Liberation Sans" font-size="8" fill="#5a5a5a">-X</text></svg><svg style="position:absolute;left:871.3px;top:95.0px" width="24" height="24" viewBox="0 0 24 24"><path d="M5.7 2.3l3.3 4h-2v8.5h-2.6v-8.5h-2z" fill="#a3d48c" stroke="#7a7a60" stroke-width="0.6"/><path d="M22.5 18.2l-4-3.2v2h-9v2.4h9v2z" fill="#e0301e" stroke="#8a6a40" stroke-width="0.6"/><rect x="2.5" y="14.8" width="6.5" height="6.5" fill="#f2c21a" stroke="#7a6a50" stroke-width="0.6"/><text x="9.5" y="11.3" font-family="Liberation Sans" font-size="8" fill="#5a5a5a">+Y</text></svg><svg style="position:absolute;left:901.0px;top:95.0px" width="24" height="24" viewBox="0 0 24 24"><path d="M17.7 2.3l3.3 4h-2v8.5h-2.6v-8.5h-2z" fill="#a3d48c" stroke="#7a7a60" stroke-width="0.6"/><path d="M1.5 18.2l4-3.2v2h9v2.4h-9v2z" fill="#e0301e" stroke="#8a6a40" stroke-width="0.6"/><rect x="14.5" y="14.8" width="6.5" height="6.5" fill="#f2c21a" stroke="#7a6a50" stroke-width="0.6"/><text x="2" y="11.3" font-family="Liberation Sans" font-size="8" fill="#5a5a5a">-Y</text></svg><svg style="position:absolute;left:930.7px;top:95.0px" width="24" height="24" viewBox="0 0 24 24"><path d="M17.7 2.3l3.3 4h-2v8.5h-2.6v-8.5h-2z" fill="#f2c21a" stroke="#7a7a60" stroke-width="0.6"/><path d="M1.5 18.2l4-3.2v2h9v2.4h-9v2z" fill="#e0301e" stroke="#8a6a40" stroke-width="0.6"/><rect x="14.5" y="14.8" width="6.5" height="6.5" fill="#a3d48c" stroke="#7a6a50" stroke-width="0.6"/><text x="1" y="11.3" font-family="Liberation Sans" font-size="8" fill="#5a5a5a">+Z</text></svg><svg style="position:absolute;left:960.6px;top:95.0px" width="24" height="24" viewBox="0 0 24 24"><path d="M5.7 2.3l3.3 4h-2v8.5h-2.6v-8.5h-2z" fill="#f2c21a" stroke="#7a7a60" stroke-width="0.6"/><path d="M22.5 18.2l-4-3.2v2h-9v2.4h9v2z" fill="#e0301e" stroke="#8a6a40" stroke-width="0.6"/><rect x="2.5" y="14.8" width="6.5" height="6.5" fill="#a3d48c" stroke="#7a6a50" stroke-width="0.6"/><text x="10.5" y="11.3" font-family="Liberation Sans" font-size="8" fill="#5a5a5a">-Z</text></svg><svg style="position:absolute;left:990.5px;top:95.0px" width="24" height="24" viewBox="0 0 24 24"><path d="M11.10 14.50A5.8 5.8 0 1 1 15.38 8.39" fill="none" stroke="#7f9a6e" stroke-width="3.6"/><path d="M11.10 14.50A5.8 5.8 0 1 1 15.38 8.39" fill="none" stroke="#a3d48c" stroke-width="2.4"/><path d="M11.80 8.40h7.2l-3.6 4.6z" fill="#a3d48c" stroke="#7f9a6e" stroke-width="0.6"/><text x="9" y="22.3" font-family="Liberation Sans" font-size="7.8" fill="#6a6a6a">+90</text></svg><svg style="position:absolute;left:1020.5px;top:95.0px" width="24" height="24" viewBox="0 0 24 24"><g transform="translate(24 0) scale(-1 1)" ><path d="M11.10 14.50A5.8 5.8 0 1 1 15.38 8.39" fill="none" stroke="#7f9a6e" stroke-width="3.6"/><path d="M11.10 14.50A5.8 5.8 0 1 1 15.38 8.39" fill="none" stroke="#a3d48c" stroke-width="2.4"/><path d="M11.80 8.40h7.2l-3.6 4.6z" fill="#a3d48c" stroke="#7f9a6e" stroke-width="0.6"/></g><text x="2.5" y="22.3" font-family="Liberation Sans" font-size="7.8" fill="#6a6a6a">-90</text></svg><svg style="position:absolute;left:1055.5px;top:100px" width="6" height="15" viewBox="0 0 6 15"><rect x="0" y="0" width="1.2" height="1.2" fill="#c4c4c4"/><rect x="3" y="0" width="1.2" height="1.2" fill="#c4c4c4"/><rect x="0" y="3" width="1.2" height="1.2" fill="#c4c4c4"/><rect x="3" y="3" width="1.2" height="1.2" fill="#c4c4c4"/><rect x="0" y="6" width="1.2" height="1.2" fill="#c4c4c4"/><rect x="3" y="6" width="1.2" height="1.2" fill="#c4c4c4"/><rect x="0" y="9" width="1.2" height="1.2" fill="#c4c4c4"/><rect x="3" y="9" width="1.2" height="1.2" fill="#c4c4c4"/><rect x="0" y="12" width="1.2" height="1.2" fill="#c4c4c4"/><rect x="3" y="12" width="1.2" height="1.2" fill="#c4c4c4"/></svg><div style="position:absolute;left:1063.5px;top:93.5px;width:29px;height:28px;background:linear-gradient(#e6e6e6,#dcdcdc);border:1px solid #c3c3c3;border-radius:3px"></div><svg style="position:absolute;left:1066.5px;top:95.0px" width="24" height="24" viewBox="0 0 24 24"><path d="M9 9v8" stroke="#e8b020" stroke-width="1.8"/><path d="M9 5.5l2.2 3.5h-4.4z" fill="#f2c21a"/><path d="M10 17h7" stroke="#e04a30" stroke-width="1.8"/><path d="M19.5 17l-3.5 2.2v-4.4z" fill="#e04a30"/><path d="M9 17l-4 3.5" stroke="#6ab84a" stroke-width="2.4"/><ellipse cx="16.5" cy="6.8" rx="4.6" ry="2.7" fill="#fff" stroke="#555" stroke-width="0.7"/><circle cx="16.5" cy="6.8" r="1.9" fill="#2a3a7a"/></svg><svg style="position:absolute;left:1095.8px;top:95.0px" width="24" height="24" viewBox="0 0 24 24"><path d="M18.2 6.2A8 8 0 1 0 20 12.5" fill="none" stroke="#7f9a6e" stroke-width="3.6"/><path d="M18.2 6.2A8 8 0 1 0 20 12.5" fill="none" stroke="#a3d48c" stroke-width="2.4"/><path d="M21.8 4l-0.6 6.8l-6.2-1.6z" fill="#a3d48c" stroke="#7f9a6e" stroke-width="0.6"/><circle cx="12" cy="12" r="2.6" fill="#f5b80a"/></svg><svg style="position:absolute;left:1125.6px;top:95.0px" width="24" height="24" viewBox="0 0 24 24"><path d="M18.2 6.2A8 8 0 1 0 20 12.5" fill="none" stroke="#7f9a6e" stroke-width="3.6"/><path d="M18.2 6.2A8 8 0 1 0 20 12.5" fill="none" stroke="#a3d48c" stroke-width="2.4"/><path d="M21.8 4l-0.6 6.8l-6.2-1.6z" fill="#a3d48c" stroke="#7f9a6e" stroke-width="0.6"/><circle cx="12" cy="12" r="2.4" fill="#f5b80a"/><path d="M12 8v8M8 12h8" stroke="#aaa" stroke-width="0.5"/></svg><svg style="position:absolute;left:1155.3px;top:95.0px" width="24" height="24" viewBox="0 0 24 24"><path d="M18.2 6.2A8 8 0 1 0 20 12.5" fill="none" stroke="#7f9a6e" stroke-width="3.6"/><path d="M18.2 6.2A8 8 0 1 0 20 12.5" fill="none" stroke="#a3d48c" stroke-width="2.4"/><path d="M21.8 4l-0.6 6.8l-6.2-1.6z" fill="#a3d48c" stroke="#7f9a6e" stroke-width="0.6"/><path d="M15 15l7 6" stroke="#111" stroke-width="1.6"/><path d="M14 14l5 0.5l-4.5 4z" fill="#111"/></svg><svg style="position:absolute;left:1191px;top:100px" width="6" height="15" viewBox="0 0 6 15"><rect x="0" y="0" width="1.2" height="1.2" fill="#c4c4c4"/><rect x="3" y="0" width="1.2" height="1.2" fill="#c4c4c4"/><rect x="0" y="3" width="1.2" height="1.2" fill="#c4c4c4"/><rect x="3" y="3" width="1.2" height="1.2" fill="#c4c4c4"/><rect x="0" y="6" width="1.2" height="1.2" fill="#c4c4c4"/><rect x="3" y="6" width="1.2" height="1.2" fill="#c4c4c4"/><rect x="0" y="9" width="1.2" height="1.2" fill="#c4c4c4"/><rect x="3" y="9" width="1.2" height="1.2" fill="#c4c4c4"/><rect x="0" y="12" width="1.2" height="1.2" fill="#c4c4c4"/><rect x="3" y="12" width="1.2" height="1.2" fill="#c4c4c4"/></svg><div style="position:absolute;left:12px;top:130.5px;width:29.5px;height:28px;background:#f9f9f9;border-left:1px solid #c8c8c8;border-bottom:1px solid #d0d0d0"></div><svg style="position:absolute;left:13.8px;top:131.5px" width="24" height="24" viewBox="0 0 24 24"><rect x="4.3" y="1.3" width="16.4" height="20.5" rx="3.5" fill="#d2d2d2" stroke="#a4a4a4" stroke-width="1.2"/><rect x="7" y="3.8" width="10.5" height="3.6" rx="1.5" fill="#bcdcf5"/><circle cx="8.4" cy="10.7" r="1.2" fill="#5a5a44"/><circle cx="12.600000000000001" cy="10.7" r="1.2" fill="#5a5a44"/><circle cx="16.8" cy="10.7" r="1.2" fill="#5a5a44"/><circle cx="8.4" cy="14.799999999999999" r="1.2" fill="#5a5a44"/><circle cx="12.600000000000001" cy="14.799999999999999" r="1.2" fill="#5a5a44"/><circle cx="16.8" cy="14.799999999999999" r="1.2" fill="#5a5a44"/><circle cx="8.4" cy="18.9" r="1.2" fill="#5a5a44"/><circle cx="12.600000000000001" cy="18.9" r="1.2" fill="#5a5a44"/><circle cx="16.8" cy="18.9" r="1.2" fill="#5a5a44"/></svg><svg style="position:absolute;left:45.8px;top:131.5px" width="24" height="24" viewBox="0 0 24 24"><ellipse cx="12" cy="12" rx="10" ry="7" transform="rotate(40 12 12)" fill="#6ab84a" stroke="#5a8a4a" stroke-width="0.8"/><ellipse cx="10.5" cy="13.5" rx="7" ry="4.5" transform="rotate(40 10.5 13.5)" fill="#8ec4e8" stroke="#3a8ab8" stroke-width="1"/></svg><svg style="position:absolute;left:76.7px;top:131.5px" width="24" height="24" viewBox="0 0 24 24"><path d="M12.6 1.8L12.6 16.7M2.6 16.3L12.6 16.7L21.3 16.3" fill="none" stroke="#8a8a78" stroke-width="0.8"/><path d="M2.6 3.9L10.1 7.2L10.1 22.1L2.6 16.3Z" fill="#6cb04c"/><path d="M5 5.5L12 3L18.5 5L18 14.5L10.1 19.5L5 15z" fill="#9ad87c" stroke="#5a9a4a" stroke-width="0.5"/><path d="M10.1 7.2L18.5 5" stroke="#5a9a4a" stroke-width="0.5"/><path d="M2.6 3.9L12.6 1.8L21.7 4.7L21.3 16.3L10.1 22.1L2.6 16.3Z" fill="none" stroke="#8a8a78" stroke-width="1"/><path d="M2.6 3.9L10.1 7.2L21.7 4.7M10.1 7.2L10.1 22.1" fill="none" stroke="#8a8a78" stroke-width="1"/></svg><svg style="position:absolute;left:107.0px;top:131.5px" width="24" height="24" viewBox="0 0 24 24"><path d="M12.6 1.8L12.6 16.7M2.6 16.3L12.6 16.7L21.3 16.3" fill="none" stroke="#8a8a78" stroke-width="0.8"/><path d="M5.5 5L13 3.5L12 19.5L5 16.5z" fill="#9ad87c" stroke="#6a9a5a" stroke-width="0.6"/><path d="M8 7.5L14.5 6L14 18L8.5 20z" fill="#8cd070"/><path d="M2.6 3.9L12.6 1.8L21.7 4.7L21.3 16.3L10.1 22.1L2.6 16.3Z" fill="none" stroke="#8a8a78" stroke-width="1"/><path d="M2.6 3.9L10.1 7.2L21.7 4.7M10.1 7.2L10.1 22.1" fill="none" stroke="#8a8a78" stroke-width="1"/></svg><svg style="position:absolute;left:137.8px;top:131.5px" width="24" height="24" viewBox="0 0 24 24"><path d="M12.6 1.8L12.6 16.7M2.6 16.3L12.6 16.7L21.3 16.3" fill="none" stroke="#8a8a78" stroke-width="0.8"/><path d="M3.5 5L7 3.5L8 4.5V11L4 10z" fill="#7cc05c" stroke="#5a9a4a" stroke-width="0.5"/><path d="M13 5.5L18.5 4V15L13.5 17.5z" fill="#9ad87c" stroke="#5a9a4a" stroke-width="0.5"/><path d="M11.5 7L13 5.5V17.5L11.5 16z" fill="#6cb04c"/><path d="M2.6 3.9L12.6 1.8L21.7 4.7L21.3 16.3L10.1 22.1L2.6 16.3Z" fill="none" stroke="#8a8a78" stroke-width="1"/><path d="M2.6 3.9L10.1 7.2L21.7 4.7M10.1 7.2L10.1 22.1" fill="none" stroke="#8a8a78" stroke-width="1"/></svg><svg style="position:absolute;left:168.4px;top:131.5px" width="24" height="24" viewBox="0 0 24 24"><path d="M2.6 3.9L12.6 1.8L21.7 4.7L21.3 16.3L10.1 22.1L2.6 16.3Z" fill="#f2f2f2" stroke="#c0c0c0" stroke-width="1"/><path d="M2.6 3.9L10.1 7.2L21.7 4.7M10.1 7.2L10.1 22.1" fill="none" stroke="#c8c8c8" stroke-width="0.8"/><path d="M7 7L12 5L17 6.5V14L12 17L7 14z" fill="#a8a8a8"/><path d="M12 9v8M12 9L17 6.5" stroke="#d8d8d8" stroke-width="0.6"/><path d="M12 9L17 6.5V14L12 17z" fill="#c4c4c4"/></svg><svg style="position:absolute;left:199.0px;top:131.5px" width="24" height="24" viewBox="0 0 24 24"><circle cx="12" cy="12" r="9.5" fill="#cfe2f5" stroke="#6a8ab0" stroke-width="0.8"/><ellipse cx="12" cy="12" rx="9.5" ry="4" fill="none" stroke="#7a9ac0" stroke-width="0.6"/><ellipse cx="12" cy="12" rx="4" ry="9.5" fill="none" stroke="#7a9ac0" stroke-width="0.6"/><circle cx="12" cy="2.5" r="1.8" fill="#7ec05a" stroke="#5a8a4a" stroke-width="0.4"/><circle cx="12" cy="21.5" r="1.8" fill="#7ec05a" stroke="#5a8a4a" stroke-width="0.4"/><circle cx="2.5" cy="12" r="1.8" fill="#7ec05a" stroke="#5a8a4a" stroke-width="0.4"/><circle cx="21.5" cy="12" r="1.8" fill="#7ec05a" stroke="#5a8a4a" stroke-width="0.4"/><circle cx="7" cy="9" r="1.8" fill="#7ec05a" stroke="#5a8a4a" stroke-width="0.4"/><circle cx="17" cy="9" r="1.8" fill="#7ec05a" stroke="#5a8a4a" stroke-width="0.4"/><circle cx="7" cy="15" r="1.8" fill="#7ec05a" stroke="#5a8a4a" stroke-width="0.4"/><circle cx="17" cy="15" r="1.8" fill="#7ec05a" stroke="#5a8a4a" stroke-width="0.4"/></svg><svg style="position:absolute;left:229.8px;top:131.5px" width="24" height="24" viewBox="0 0 24 24"><path d="M3 4c5-2 9 2 18 0M3 7c4-1 8 1 18 0M3 17c5 1 9 -1 18 0M3 20c5 2 9-2 18 0" fill="none" stroke="#8a8a78" stroke-width="0.9"/><circle cx="10" cy="12" r="3.8" fill="#8ccc6a" stroke="#6a9a5a" stroke-width="0.6"/></svg><svg style="position:absolute;left:260.0px;top:131.5px" width="24" height="24" viewBox="0 0 24 24"><path d="M2.5 15c5 0 9-3 12-10l7 3c-3 8-8 13-19 13z" fill="#a3d48c" stroke="#6a8a5a" stroke-width="0.8"/><path d="M14 21l7-10v10z" fill="#d4f0f0" stroke="#7a8a80" stroke-width="0.6"/></svg><svg style="position:absolute;left:291.6px;top:131.5px" width="24" height="24" viewBox="0 0 24 24"><circle cx="12" cy="12" r="9.3" fill="none" stroke="#8a8a78" stroke-width="0.9"/><circle cx="8.5" cy="8.5" r="2.2" fill="#c8eef2" stroke="#8ab0b0" stroke-width="0.5"/><circle cx="14.5" cy="14" r="3.4" fill="#8ccc6a"/><circle cx="7.5" cy="15.5" r="1.5" fill="#8ccc6a"/></svg><svg style="position:absolute;left:321.3px;top:131.5px" width="24" height="24" viewBox="0 0 24 24"><circle cx="13" cy="13" r="8.5" fill="none" stroke="#8a8a78" stroke-width="0.9"/><circle cx="4.5" cy="4" r="2.4" fill="#c8eef2" stroke="#8ab0b0" stroke-width="0.5"/><circle cx="15.5" cy="15" r="3.4" fill="#8ccc6a"/><circle cx="8.5" cy="16.5" r="1.5" fill="#8ccc6a"/></svg><svg style="position:absolute;left:357px;top:136px" width="6" height="15" viewBox="0 0 6 15"><rect x="0" y="0" width="1.2" height="1.2" fill="#c4c4c4"/><rect x="3" y="0" width="1.2" height="1.2" fill="#c4c4c4"/><rect x="0" y="3" width="1.2" height="1.2" fill="#c4c4c4"/><rect x="3" y="3" width="1.2" height="1.2" fill="#c4c4c4"/><rect x="0" y="6" width="1.2" height="1.2" fill="#c4c4c4"/><rect x="3" y="6" width="1.2" height="1.2" fill="#c4c4c4"/><rect x="0" y="9" width="1.2" height="1.2" fill="#c4c4c4"/><rect x="3" y="9" width="1.2" height="1.2" fill="#c4c4c4"/><rect x="0" y="12" width="1.2" height="1.2" fill="#c4c4c4"/><rect x="3" y="12" width="1.2" height="1.2" fill="#c4c4c4"/></svg><svg style="position:absolute;left:367.5px;top:131.5px" width="24" height="24" viewBox="0 0 24 24"><path d="M5 4v16h15" fill="none" stroke="#8a8a70" stroke-width="1.2"/><rect x="10.5" y="8" width="5" height="8" fill="#bfe0f5" stroke="#2b8fd8" stroke-width="1"/><path d="M13 5v3M13 16v3M11 5h4M11 19h4M10.5 12h5" stroke="#2b8fd8" stroke-width="1"/></svg><svg style="position:absolute;left:398.0px;top:131.5px" width="24" height="24" viewBox="0 0 24 24"><path d="M3.5 3.5h14v6h-8v8h-6z" fill="#cfe4f5" stroke="#8a8a8a" stroke-width="1"/><rect x="13" y="13" width="8" height="8" fill="#a3d48c" stroke="#8a9a70" stroke-dasharray="1.5 1"/></svg><svg style="position:absolute;left:429.0px;top:131.5px" width="24" height="24" viewBox="0 0 24 24"><path d="M3 2v20h20" fill="none" stroke="#7a7a60" stroke-width="1.2"/><rect x="5" y="15" width="3" height="6" fill="#2a88e0"/><rect x="8" y="10" width="3" height="11" fill="#1aa0e8"/><rect x="11" y="8" width="3" height="13" fill="#40c070"/><rect x="14" y="3" width="3" height="18" fill="#6ac03a"/><rect x="17" y="11" width="3" height="10" fill="#e0d020"/><rect x="20" y="16" width="3" height="5" fill="#f5b010"/></svg><svg style="position:absolute;left:460.4px;top:131.5px" width="24" height="24" viewBox="0 0 24 24"><circle cx="7" cy="7" r="4.5" fill="#fff" stroke="#6a6a6a" stroke-width="0.9"/><path d="M7 4.5v2.5l2 1.5" fill="none" stroke="#2b8fd8" stroke-width="0.9"/><path d="M3 19h17M4 16v4" stroke="#2b8fd8" stroke-width="0.8"/><path d="M5 18l1-2l1 3l1-4l1 3l1-2l1 3l1-3l1 2l1-2l1 3l1-2l1 1.5" fill="none" stroke="#2b8fd8" stroke-width="1"/><circle cx="17" cy="7" r="4.5" fill="#b8963a" stroke="#8a7040" stroke-width="0.8"/><circle cx="17" cy="7" r="2" fill="#d8c080"/></svg><svg style="position:absolute;left:491.3px;top:131.5px" width="24" height="24" viewBox="0 0 24 24"><path d="M3 4l15-2l4 6l-4 14l-13-1z" fill="#7ab860" stroke="#5a8a4a" stroke-width="0.8"/><path d="M5 19l16-14" stroke="#2b8fd8" stroke-width="2.2"/><path d="M5 17l14-12" stroke="#a8d8f0" stroke-width="0.8" stroke-dasharray="1 1"/></svg><svg style="position:absolute;left:521.7px;top:131.5px" width="24" height="24" viewBox="0 0 24 24"><circle cx="7" cy="7" r="4.5" fill="#fff" stroke="#6a6a6a" stroke-width="0.9"/><path d="M7 4.5v2.5l2 1.5" fill="none" stroke="#2b8fd8" stroke-width="0.9"/><path d="M3 19h17M4 16v4" stroke="#2b8fd8" stroke-width="0.8"/><path d="M5 18l1-2l1 3l1-4l1 3l1-2l1 3l1-3l1 2l1-2l1 3l1-2l1 1.5" fill="none" stroke="#2b8fd8" stroke-width="1"/><rect x="13" y="3" width="8" height="8" fill="none" stroke="#aaa" stroke-width="0.6" stroke-dasharray="1 1"/><path d="M17 4l3 5h-6z" fill="#a3d48c"/></svg><svg style="position:absolute;left:552.5px;top:131.5px" width="24" height="24" viewBox="0 0 24 24"><path d="M12 2l9 4v12l-9 4l-9-4V6z" fill="#d4e8f8" stroke="#b0c8dc" stroke-width="0.9"/><path d="M12 6v12M7 8.5l10 7M17 8.5l-10 7" stroke="#6a7a8a" stroke-width="0.9"/></svg><svg style="position:absolute;left:583.4px;top:131.5px" width="24" height="24" viewBox="0 0 24 24"><path d="M6 3c-2 0-2 1-2 3v3c0 2-1 3-2 3c1 0 2 1 2 3v3c0 2 0 3 2 3M18 3c2 0 2 1 2 3v3c0 2 1 3 2 3c-1 0-2 1-2 3v3c0 2 0 3-2 3" fill="none" stroke="#555" stroke-width="1.3"/><circle cx="8" cy="18" r="1.3" fill="#2b8fd8"/><circle cx="12" cy="18" r="1.3" fill="#2b8fd8"/><circle cx="16" cy="18" r="1.3" fill="#2b8fd8"/></svg><div style="position:absolute;left:617.5px;top:137.50px;height:13px;line-height:13px;font-size:13px;font-weight:normal;color:#b9b9b9;letter-spacing:0.55px;white-space:nowrap;">Threshold Table</div><svg style="position:absolute;left:734px;top:136px" width="6" height="15" viewBox="0 0 6 15"><rect x="0" y="0" width="1.2" height="1.2" fill="#c4c4c4"/><rect x="3" y="0" width="1.2" height="1.2" fill="#c4c4c4"/><rect x="0" y="3" width="1.2" height="1.2" fill="#c4c4c4"/><rect x="3" y="3" width="1.2" height="1.2" fill="#c4c4c4"/><rect x="0" y="6" width="1.2" height="1.2" fill="#c4c4c4"/><rect x="3" y="6" width="1.2" height="1.2" fill="#c4c4c4"/><rect x="0" y="9" width="1.2" height="1.2" fill="#c4c4c4"/><rect x="3" y="9" width="1.2" height="1.2" fill="#c4c4c4"/><rect x="0" y="12" width="1.2" height="1.2" fill="#c4c4c4"/><rect x="3" y="12" width="1.2" height="1.2" fill="#c4c4c4"/></svg><svg style="position:absolute;left:744.3px;top:131.5px" width="24" height="24" viewBox="0 0 24 24"><path d="M2 17l14-14l6 5l-14 14z" fill="#f0c020" stroke="#a88a20" stroke-width="0.8"/><path d="M6 14l2 2M9 11l1.5 1.5M12 8l2 2M15 5l1.5 1.5" stroke="#7a6a20" stroke-width="0.8"/></svg><div style="position:absolute;left:0px;top:161px;width:426px;height:786px;background:#efefef"></div><div style="position:absolute;left:0px;top:161px;width:1px;height:303px;background:#d4d4d4"></div><div style="position:absolute;left:4px;top:164.20px;height:13px;line-height:13px;font-size:13px;font-weight:normal;color:#1e1e1e;letter-spacing:0.55px;white-space:nowrap;-webkit-text-stroke:0.15px #1e1e1e;">Pipeline Browser</div><svg style="position:absolute;left:399px;top:166px" width="25" height="11" viewBox="0 0 25 11"><rect x="0.5" y="0.5" width="10" height="10" rx="2.2" fill="none" stroke="#7a7a7a"/><rect x="4.3" y="2.8" width="4" height="3.6" rx="0.8" fill="none" stroke="#7a7a7a" stroke-width="1"/><rect x="2.6" y="4.6" width="3.8" height="3.6" rx="1" fill="#fff" stroke="#7a7a7a" stroke-width="1"/><rect x="13.5" y="0.5" width="10" height="10" rx="2.2" fill="none" stroke="#7a7a7a"/><path d="M16.2 3.2l4.6 4.6M20.8 3.2l-4.6 4.6" stroke="#4a4a4a" stroke-width="1.7"/></svg><div style="position:absolute;left:0px;top:180px;width:425px;height:252px;background:#fff;border:1px solid #cfcfcf;border-left:1px solid #d4d4d4;border-top:1px solid #d8d8d8"></div><div style="position:absolute;left:62.5px;top:181px;width:1px;height:65px;background:#a8a8a8"></div><svg style="position:absolute;left:57.5px;top:185.5px" width="10" height="15" viewBox="0 0 10 15"><rect x="0.5" y="0.5" width="8.5" height="14" rx="1.5" fill="#c8c8c8" stroke="#404040"/><rect x="2" y="2.5" width="5.5" height="2.5" fill="#222"/><rect x="2" y="6" width="5.5" height="1" fill="#777"/><rect x="2" y="8" width="3" height="3" fill="#8a8a8a"/></svg><div style="position:absolute;left:72.6px;top:186.20px;height:13px;line-height:13px;font-size:13px;font-weight:normal;color:#1e1e1e;letter-spacing:0.55px;white-space:nowrap;-webkit-text-stroke:0.15px #1e1e1e;">builtin:</div><svg style="position:absolute;left:55px;top:206.5px" width="15" height="14" viewBox="0 0 15 14"><path d="M0.5 1.9L7 0.4L14 3.5L6.2 4.9z" fill="#9ad87a" stroke="#5e6e50" stroke-width="0.7"/><path d="M0.5 1.9L6.2 4.9L6.2 13.4L0.5 10.7z" fill="#5c9e44" stroke="#5e6e50" stroke-width="0.7"/><path d="M6.2 4.9L14 3.5L13.8 12L6.2 13.4z" fill="#7ccc5c" stroke="#5e6e50" stroke-width="0.7"/><path d="M9.5 5v7.5" stroke="#6cb84c" stroke-width="0.6"/></svg><div style="position:absolute;left:72.6px;top:206.80px;height:13px;line-height:13px;font-size:13px;font-weight:normal;color:#1e1e1e;letter-spacing:0.55px;white-space:nowrap;-webkit-text-stroke:0.15px #1e1e1e;">test</div><svg style="position:absolute;left:55px;top:227px" width="15" height="14" viewBox="0 0 15 14"><path d="M0.5 1.9L7 0.4L14 3.5L6.2 4.9z" fill="#9ad87a" stroke="#5e6e50" stroke-width="0.7"/><path d="M0.5 1.9L6.2 4.9L6.2 13.4L0.5 10.7z" fill="#5c9e44" stroke="#5e6e50" stroke-width="0.7"/><path d="M6.2 4.9L14 3.5L13.8 12L6.2 13.4z" fill="#7ccc5c" stroke="#5e6e50" stroke-width="0.7"/><path d="M9.5 5v7.5" stroke="#6cb84c" stroke-width="0.6"/></svg><div style="position:absolute;left:72.6px;top:227.40px;height:13px;line-height:13px;font-size:13px;font-weight:normal;color:#1e1e1e;letter-spacing:0.55px;white-space:nowrap;-webkit-text-stroke:0.15px #1e1e1e;">ExtractBlock1</div><div style="position:absolute;left:53.5px;top:246px;width:190.5px;height:17px;background:#308cc6"></div><svg style="position:absolute;left:55px;top:247.5px" width="15" height="14" viewBox="0 0 15 14"><path d="M0.5 1.9L7 0.4L14 3.5L6.2 4.9z" fill="#9ad87a" stroke="#5e6e50" stroke-width="0.7"/><path d="M0.5 1.9L6.2 4.9L6.2 13.4L0.5 10.7z" fill="#5c9e44" stroke="#5e6e50" stroke-width="0.7"/><path d="M6.2 4.9L14 3.5L13.8 12L6.2 13.4z" fill="#7ccc5c" stroke="#5e6e50" stroke-width="0.7"/><path d="M9.5 5v7.5" stroke="#6cb84c" stroke-width="0.6"/></svg><div style="position:absolute;left:72.6px;top:248.20px;height:13px;line-height:13px;font-size:13px;font-weight:normal;color:#ffffff;letter-spacing:0.55px;white-space:nowrap;">GenerateSurfaceNormals1</div><svg style="position:absolute;left:4px;top:208.5px" width="14" height="10" viewBox="0 0 14 10"><path d="M1.9 3Q6.6 -0.6 11.6 3" fill="none" stroke="#a8a8a8" stroke-width="0.9"/><path d="M2 6Q6.6 8.2 11 5.8" fill="none" stroke="#9a9a9a" stroke-width="1.1"/><path d="M3.6 6.8l-0.5 2M6.4 7.3v2.1M9.2 6.9l0.5 2" stroke="#a0a0a0" stroke-width="0.9"/></svg><svg style="position:absolute;left:4px;top:229px" width="14" height="10" viewBox="0 0 14 10"><path d="M1.9 3Q6.6 -0.6 11.6 3" fill="none" stroke="#a8a8a8" stroke-width="0.9"/><path d="M2 6Q6.6 8.2 11 5.8" fill="none" stroke="#9a9a9a" stroke-width="1.1"/><path d="M3.6 6.8l-0.5 2M6.4 7.3v2.1M9.2 6.9l0.5 2" stroke="#a0a0a0" stroke-width="0.9"/></svg><svg style="position:absolute;left:3.5px;top:249.5px" width="15" height="10" viewBox="0 0 15 10"><path d="M0.8 5c3-5.2 10.4-5.2 13.4 0c-3 5.2-10.4 5.2-13.4 0z" fill="#fff" stroke="#666" stroke-width="0.9"/><circle cx="7.5" cy="5" r="3.4" fill="#2a86cc"/><circle cx="8.2" cy="4.3" r="1.8" fill="#000"/></svg><svg style="position:absolute;left:205px;top:433px" width="16" height="3" viewBox="0 0 16 3"><rect x="0" y="0" width="1.2" height="1.2" fill="#bdbdbd"/><rect x="3" y="0" width="1.2" height="1.2" fill="#bdbdbd"/><rect x="6" y="0" width="1.2" height="1.2" fill="#bdbdbd"/><rect x="9" y="0" width="1.2" height="1.2" fill="#bdbdbd"/><rect x="12" y="0" width="1.2" height="1.2" fill="#bdbdbd"/></svg><div style="position:absolute;left:89px;top:439.5px;width:99px;height:24px;background:#dddddd;border:1px solid #c8c8c8;border-bottom:none;border-radius:3px 3px 0 0"></div><div style="position:absolute;left:1px;top:438px;width:89px;height:26px;background:#f3f3f3;border:1px solid #c8c8c8;border-bottom:none;border-radius:3px 3px 0 0"></div><div style="position:absolute;left:90px;top:463px;width:334px;height:1px;background:#cdcdcd"></div><div style="position:absolute;left:11.4px;top:444.70px;height:13px;line-height:13px;font-size:13px;font-weight:normal;color:#1e1e1e;letter-spacing:0.65px;white-space:nowrap;-webkit-text-stroke:0.15px #1e1e1e;">Properties</div><div style="position:absolute;left:101px;top:445.30px;height:13px;line-height:13px;font-size:13px;font-weight:normal;color:#1e1e1e;letter-spacing:0.6px;white-space:nowrap;-webkit-text-stroke:0.15px #1e1e1e;">Information</div><div style="position:absolute;left:4px;top:467.60px;height:13px;line-height:13px;font-size:13px;font-weight:normal;color:#1e1e1e;letter-spacing:0.65px;white-space:nowrap;-webkit-text-stroke:0.15px #1e1e1e;">Properties</div><svg style="position:absolute;left:399px;top:468px" width="25" height="11" viewBox="0 0 25 11"><rect x="0.5" y="0.5" width="10" height="10" rx="2.2" fill="none" stroke="#7a7a7a"/><rect x="4.3" y="2.8" width="4" height="3.6" rx="0.8" fill="none" stroke="#7a7a7a" stroke-width="1"/><rect x="2.6" y="4.6" width="3.8" height="3.6" rx="1" fill="#fff" stroke="#7a7a7a" stroke-width="1"/><rect x="13.5" y="0.5" width="10" height="10" rx="2.2" fill="none" stroke="#7a7a7a"/><path d="M16.2 3.2l4.6 4.6M20.8 3.2l-4.6 4.6" stroke="#4a4a4a" stroke-width="1.7"/></svg><div style="position:absolute;left:8.5px;top:491px;width:100.0px;height:23px;background:linear-gradient(#fafafa,#ececec);border:1px solid #c4c4c4;border-radius:3px"></div><div style="position:absolute;left:111px;top:491px;width:100px;height:23px;background:linear-gradient(#fafafa,#ececec);border:1px solid #c4c4c4;border-radius:3px"></div><div style="position:absolute;left:213.5px;top:491px;width:100.0px;height:23px;background:linear-gradient(#fafafa,#ececec);border:1px solid #c4c4c4;border-radius:3px"></div><div style="position:absolute;left:316px;top:491px;width:100px;height:23px;background:linear-gradient(#fafafa,#ececec);border:1px solid #c4c4c4;border-radius:3px"></div><svg style="position:absolute;left:30px;top:494.5px" width="14" height="15" viewBox="0 0 14 15"><path d="M1 6l3.2-1.6h3l-3.2 1.6z" fill="#d8d8d8" stroke="#b0b0b0" stroke-width="0.6"/><path d="M1 6h3v7.5h-3z" fill="#c4c4c4" stroke="#b0b0b0" stroke-width="0.6"/><path d="M4 6l3.2-1.6v7.5l-3.2 1.6z" fill="#d4d4d4" stroke="#b0b0b0" stroke-width="0.6"/><path d="M6.5 7.5l5.5-5.5" stroke="#c0c0c0" stroke-width="2.4"/><path d="M8 1.5h5v5z" fill="#c0c0c0"/></svg><div style="position:absolute;left:47.2px;top:495.20px;height:13px;line-height:13px;font-size:13px;font-weight:normal;color:#b4b4b4;letter-spacing:0.6px;white-space:nowrap;">Apply</div><svg style="position:absolute;left:133px;top:495.5px" width="15" height="15" viewBox="0 0 15 15"><circle cx="7.5" cy="7.5" r="5.8" fill="none" stroke="#9c9c9c" stroke-width="2.2"/><path d="M3.5 11.5l8-8" stroke="#9c9c9c" stroke-width="2.2"/></svg><div style="position:absolute;left:150.2px;top:495.20px;height:13px;line-height:13px;font-size:13px;font-weight:normal;color:#b4b4b4;letter-spacing:0.6px;white-space:nowrap;">Reset</div><svg style="position:absolute;left:234px;top:497px" width="12" height="12" viewBox="0 0 12 12"><path d="M2.5 2.5l7 7M9.5 2.5l-7 7" stroke="#e02828" stroke-width="3" stroke-linecap="round"/></svg><div style="position:absolute;left:249.5px;top:495.20px;height:13px;line-height:13px;font-size:13px;font-weight:normal;color:#1e1e1e;letter-spacing:0.6px;white-space:nowrap;-webkit-text-stroke:0.15px #1e1e1e;">Delete</div><div style="position:absolute;left:66px;width:600px;text-align:center;top:493.11px;height:17px;line-height:17px;font-size:17px;font-weight:bold;color:#8ab86a;letter-spacing:0px;white-space:nowrap;">?</div><div style="position:absolute;left:8.5px;top:520px;width:383px;height:22.5px;background:#fff;border:1px solid #c0c0c0;border-radius:3px"></div><div style="position:absolute;left:11px;top:525.10px;height:13px;line-height:13px;font-size:13px;font-weight:normal;color:#9a9a9a;letter-spacing:0.3px;white-space:nowrap;">Search ... (use Esc to clear text)</div><div style="position:absolute;left:394.5px;top:520px;width:21.5px;height:22.5px;background:linear-gradient(#fafafa,#ececec);border:1px solid #c4c4c4;border-radius:3px"></div><svg style="position:absolute;left:397px;top:523px" width="16" height="16" viewBox="0 0 16 16"><g transform="translate(8 8)"><rect x="-1.6" y="-7" width="3.2" height="4" fill="#b8b8b8" transform="rotate(0)"/><rect x="-1.6" y="-7" width="3.2" height="4" fill="#b8b8b8" transform="rotate(45)"/><rect x="-1.6" y="-7" width="3.2" height="4" fill="#b8b8b8" transform="rotate(90)"/><rect x="-1.6" y="-7" width="3.2" height="4" fill="#b8b8b8" transform="rotate(135)"/><rect x="-1.6" y="-7" width="3.2" height="4" fill="#b8b8b8" transform="rotate(180)"/><rect x="-1.6" y="-7" width="3.2" height="4" fill="#b8b8b8" transform="rotate(225)"/><rect x="-1.6" y="-7" width="3.2" height="4" fill="#b8b8b8" transform="rotate(270)"/><rect x="-1.6" y="-7" width="3.2" height="4" fill="#b8b8b8" transform="rotate(315)"/><circle r="4.8" fill="#b8b8b8"/><circle r="2.2" fill="#f4f4f4"/></g></svg><div style="position:absolute;left:403px;top:548px;width:1px;height:394px;background:#c8c8c8"></div><div style="position:absolute;left:404px;top:548px;width:12px;height:381px;background:#e4e4e4"></div><div style="position:absolute;left:404px;top:548px;width:12px;height:13px;background:#f4f4f4"></div><div style="position:absolute;left:404px;top:561px;width:12px;height:180px;background:linear-gradient(90deg,#ffffff,#f2f2f2);border-top:1px solid #d8d8d8;border-bottom:1px solid #d8d8d8"></div><div style="position:absolute;left:404px;top:929px;width:12px;height:13px;background:#efefef"></div><svg style="position:absolute;left:404px;top:548px" width="12" height="12" viewBox="0 0 12 12"><path d="M2.2 8.5h7.6l-3.8-4.3z" fill="#444"/></svg><svg style="position:absolute;left:404px;top:929px" width="12" height="12" viewBox="0 0 12 12"><path d="M2.2 4h7.6l-3.8 4.3z" fill="#444"/></svg><svg style="position:absolute;left:426px;top:549px" width="4" height="17" viewBox="0 0 4 17"><rect x="1" y="0.0" width="1.3" height="1.3" fill="#c8c8c8"/><rect x="1" y="2.8" width="1.3" height="1.3" fill="#c8c8c8"/><rect x="1" y="5.6" width="1.3" height="1.3" fill="#c8c8c8"/><rect x="1" y="8.399999999999999" width="1.3" height="1.3" fill="#c8c8c8"/><rect x="1" y="11.2" width="1.3" height="1.3" fill="#c8c8c8"/><rect x="1" y="14.0" width="1.3" height="1.3" fill="#c8c8c8"/></svg><div style="position:absolute;left:8.5px;top:549px;width:276px;height:24.5px;background:#ebebeb;border:1px solid #c6c6c6"></div><div style="position:absolute;left:18.9px;top:559.25px;width:12.5px;height:3.6px;background:#3a95d0;border-radius:1px"></div><div style="position:absolute;left:38.5px;top:556.75px;height:13px;line-height:13px;font-size:13px;font-weight:bold;color:#111;letter-spacing:0.55px;white-space:nowrap;">Properties (GenerateSurfaceNorma</div><div style="position:absolute;left:288.2px;top:549.8px;width:25.5px;height:21.90000000000009px;background:linear-gradient(#fafafa,#ececec);border:1px solid #c4c4c4;border-radius:3px"></div><div style="position:absolute;left:317.8px;top:549.8px;width:25.5px;height:21.90000000000009px;background:linear-gradient(#fafafa,#ececec);border:1px solid #c4c4c4;border-radius:3px"></div><div style="position:absolute;left:347.5px;top:549.8px;width:25.5px;height:21.90000000000009px;background:linear-gradient(#fafafa,#ececec);border:1px solid #c4c4c4;border-radius:3px"></div><div style="position:absolute;left:377.4px;top:549.8px;width:25.5px;height:21.90000000000009px;background:linear-gradient(#fafafa,#ececec);border:1px solid #c4c4c4;border-radius:3px"></div><svg style="position:absolute;left:293px;top:553.5px" width="16" height="16" viewBox="0 0 16 16"><path d="M6 1.5h5l2.5 2.5v8h-7.5z" fill="#d6d6d6" stroke="#9a9a9a" stroke-width="0.8"/><path d="M2.5 4.5h5l2.5 2.5v8h-7.5z" fill="#cfcfcf" stroke="#8a8a8a" stroke-width="0.8"/><path d="M4 8h4.5M4 10h4.5M4 12h4.5M8 4h4M8 6h4" stroke="#a8a8a8" stroke-width="0.6"/></svg><svg style="position:absolute;left:322.5px;top:553.5px" width="16" height="16" viewBox="0 0 16 16"><path d="M7 1.5h4.5l2 2v9h-6.5z" fill="#e0e0e0" stroke="#b8b8b8" stroke-width="0.8"/><path d="M3 4.5h5l2 2v8.5h-7z" fill="#d8d8d8" stroke="#b4b4b4" stroke-width="0.8"/><path d="M4.5 8h4M4.5 10h4M4.5 12h4" stroke="#bcbcbc" stroke-width="0.6"/></svg><svg style="position:absolute;left:352px;top:553.5px" width="16" height="16" viewBox="0 0 16 16"><path d="M12.8 5.5A5.5 5.5 0 0 0 3.2 6.5" fill="none" stroke="#2b8fcc" stroke-width="1.9"/><path d="M3.2 10.5A5.5 5.5 0 0 0 12.8 9.5" fill="none" stroke="#2b8fcc" stroke-width="1.9"/><path d="M14.8 2.2v5.3h-5.3z" fill="#2b8fcc"/><path d="M1.2 13.8v-5.3h5.3z" fill="#2b8fcc"/></svg><svg style="position:absolute;left:382px;top:552.5px" width="16" height="17" viewBox="0 0 16 17"><path d="M6 1.5h4v6.5h3l-5 7l-5-7h3z" fill="#c8e444" stroke="#6a7a30" stroke-width="0.8"/><path d="M2.5 16h11" stroke="#555" stroke-width="1"/></svg><div style="position:absolute;left:8.5px;top:581.50px;height:13px;line-height:13px;font-size:13px;font-weight:normal;color:#1e1e1e;letter-spacing:0.55px;white-space:nowrap;-webkit-text-stroke:0.15px #1e1e1e;">Feature Angle</div><div style="position:absolute;left:102px;top:588.5px;width:146.5px;height:4.5px;background:#d4d4d4;border:1px solid #bcbcbc;border-radius:3px"></div><div style="position:absolute;left:102px;top:588.5px;width:28px;height:4.5px;background:#3a95d0;border-radius:3px"></div><div style="position:absolute;left:124px;top:584.5px;width:13px;height:12.5px;background:linear-gradient(#fdfdfd,#eaeaea);border:1px solid #aaaaaa;border-radius:3px"></div><div style="position:absolute;left:255.5px;top:579.5px;width:147.0px;height:22.5px;background:#fff;border:1px solid #c0c0c0;border-radius:3px"></div><div style="position:absolute;left:258.5px;top:584.75px;height:13px;line-height:13px;font-size:13px;font-weight:normal;color:#1e1e1e;letter-spacing:0.5px;white-space:nowrap;-webkit-text-stroke:0.15px #1e1e1e;">30</div><div style="position:absolute;left:8px;top:610.1px;width:13px;height:13px;background:#fff;border:1px solid #bdbdbd;border-radius:1px"></div><svg style="position:absolute;left:8px;top:610.1px" width="13" height="13" viewBox="0 0 13 13"><path d="M3.2 6.2l2.6 3.6l4-7" fill="none" stroke="#111" stroke-width="1.7"/></svg><div style="position:absolute;left:25.7px;top:610.40px;height:13px;line-height:13px;font-size:13px;font-weight:normal;color:#1e1e1e;letter-spacing:0.55px;white-space:nowrap;-webkit-text-stroke:0.15px #1e1e1e;">Splitting</div><div style="position:absolute;left:8px;top:635.2px;width:13px;height:13px;background:#fff;border:1px solid #bdbdbd;border-radius:1px"></div><svg style="position:absolute;left:8px;top:635.2px" width="13" height="13" viewBox="0 0 13 13"><path d="M3.2 6.2l2.6 3.6l4-7" fill="none" stroke="#111" stroke-width="1.7"/></svg><div style="position:absolute;left:25.7px;top:635.50px;height:13px;line-height:13px;font-size:13px;font-weight:normal;color:#1e1e1e;letter-spacing:0.55px;white-space:nowrap;-webkit-text-stroke:0.15px #1e1e1e;">Consistency</div><div style="position:absolute;left:8px;top:660.3000000000001px;width:13px;height:13px;background:#fff;border:1px solid #bdbdbd;border-radius:1px"></div><div style="position:absolute;left:25.7px;top:660.60px;height:13px;line-height:13px;font-size:13px;font-weight:normal;color:#1e1e1e;letter-spacing:0.55px;white-space:nowrap;-webkit-text-stroke:0.15px #1e1e1e;">Flip Normals</div><div style="position:absolute;left:8px;top:685.4000000000001px;width:13px;height:13px;background:#fff;border:1px solid #bdbdbd;border-radius:1px"></div><svg style="position:absolute;left:8px;top:685.4000000000001px" width="13" height="13" viewBox="0 0 13 13"><path d="M3.2 6.2l2.6 3.6l4-7" fill="none" stroke="#111" stroke-width="1.7"/></svg><div style="position:absolute;left:25.7px;top:685.70px;height:13px;line-height:13px;font-size:13px;font-weight:normal;color:#1e1e1e;letter-spacing:0.55px;white-space:nowrap;-webkit-text-stroke:0.15px #1e1e1e;">Non-Manifold Traversal</div><div style="position:absolute;left:8px;top:710.5px;width:13px;height:13px;background:#fff;border:1px solid #bdbdbd;border-radius:1px"></div><svg style="position:absolute;left:8px;top:710.5px" width="13" height="13" viewBox="0 0 13 13"><path d="M3.2 6.2l2.6 3.6l4-7" fill="none" stroke="#111" stroke-width="1.7"/></svg><div style="position:absolute;left:25.7px;top:710.80px;height:13px;line-height:13px;font-size:13px;font-weight:normal;color:#1e1e1e;letter-spacing:0.55px;white-space:nowrap;-webkit-text-stroke:0.15px #1e1e1e;">Compute Cell Normals</div><div style="position:absolute;left:8px;top:735.6px;width:13px;height:13px;background:#fff;border:1px solid #bdbdbd;border-radius:1px"></div><svg style="position:absolute;left:8px;top:735.6px" width="13" height="13" viewBox="0 0 13 13"><path d="M3.2 6.2l2.6 3.6l4-7" fill="none" stroke="#111" stroke-width="1.7"/></svg><div style="position:absolute;left:25.7px;top:735.90px;height:13px;line-height:13px;font-size:13px;font-weight:normal;color:#1e1e1e;letter-spacing:0.55px;white-space:nowrap;-webkit-text-stroke:0.15px #1e1e1e;">Piece Invariant</div><div style="position:absolute;left:8.5px;top:759px;width:276px;height:25px;background:#ebebeb;border:1px solid #c6c6c6"></div><div style="position:absolute;left:18.9px;top:769.5px;width:12.5px;height:3.6px;background:#3a95d0;border-radius:1px"></div><div style="position:absolute;left:38.5px;top:767.00px;height:13px;line-height:13px;font-size:13px;font-weight:bold;color:#111;letter-spacing:0.55px;white-space:nowrap;">Display (GeometryRepresentation)</div><div style="position:absolute;left:288.2px;top:759.8px;width:25.5px;height:22.40000000000009px;background:linear-gradient(#fafafa,#ececec);border:1px solid #c4c4c4;border-radius:3px"></div><div style="position:absolute;left:317.8px;top:759.8px;width:25.5px;height:22.40000000000009px;background:linear-gradient(#fafafa,#ececec);border:1px solid #c4c4c4;border-radius:3px"></div><div style="position:absolute;left:347.5px;top:759.8px;width:25.5px;height:22.40000000000009px;background:linear-gradient(#fafafa,#ececec);border:1px solid #c4c4c4;border-radius:3px"></div><div style="position:absolute;left:377.4px;top:759.8px;width:25.5px;height:22.40000000000009px;background:linear-gradient(#fafafa,#ececec);border:1px solid #c4c4c4;border-radius:3px"></div><svg style="position:absolute;left:293px;top:763.5px" width="16" height="16" viewBox="0 0 16 16"><path d="M6 1.5h5l2.5 2.5v8h-7.5z" fill="#d6d6d6" stroke="#9a9a9a" stroke-width="0.8"/><path d="M2.5 4.5h5l2.5 2.5v8h-7.5z" fill="#cfcfcf" stroke="#8a8a8a" stroke-width="0.8"/><path d="M4 8h4.5M4 10h4.5M4 12h4.5M8 4h4M8 6h4" stroke="#a8a8a8" stroke-width="0.6"/></svg><svg style="position:absolute;left:322.5px;top:763.5px" width="16" height="16" viewBox="0 0 16 16"><path d="M7 1.5h4.5l2 2v9h-6.5z" fill="#e0e0e0" stroke="#b8b8b8" stroke-width="0.8"/><path d="M3 4.5h5l2 2v8.5h-7z" fill="#d8d8d8" stroke="#b4b4b4" stroke-width="0.8"/><path d="M4.5 8h4M4.5 10h4M4.5 12h4" stroke="#bcbcbc" stroke-width="0.6"/></svg><svg style="position:absolute;left:352px;top:763.5px" width="16" height="16" viewBox="0 0 16 16"><path d="M12.8 5.5A5.5 5.5 0 0 0 3.2 6.5" fill="none" stroke="#2b8fcc" stroke-width="1.9"/><path d="M3.2 10.5A5.5 5.5 0 0 0 12.8 9.5" fill="none" stroke="#2b8fcc" stroke-width="1.9"/><path d="M14.8 2.2v5.3h-5.3z" fill="#2b8fcc"/><path d="M1.2 13.8v-5.3h5.3z" fill="#2b8fcc"/></svg><svg style="position:absolute;left:382px;top:762.5px" width="16" height="17" viewBox="0 0 16 17"><path d="M6 1.5h4v6.5h3l-5 7l-5-7h3z" fill="#c8e444" stroke="#6a7a30" stroke-width="0.8"/><path d="M2.5 16h11" stroke="#555" stroke-width="1"/></svg><div style="position:absolute;left:8.5px;top:791.50px;height:13px;line-height:13px;font-size:13px;font-weight:normal;color:#1e1e1e;letter-spacing:0.5px;white-space:nowrap;-webkit-text-stroke:0.15px #1e1e1e;">Representation</div><div style="position:absolute;left:110.5px;top:789.5px;width:292.0px;height:23.0px;background:linear-gradient(#fcfcfc,#efefef);border:1px solid #bcbcbc;border-radius:3px"></div><svg style="position:absolute;left:388.5px;top:798.0px" width="8" height="5" viewBox="0 0 8 5"><path d="M0 0h8l-4 4.5z" fill="#555"/></svg><div style="position:absolute;left:114.8px;top:794.80px;height:13px;line-height:13px;font-size:13px;font-weight:normal;color:#1e1e1e;letter-spacing:0.5px;white-space:nowrap;-webkit-text-stroke:0.15px #1e1e1e;">Surface</div><div style="position:absolute;left:8.5px;top:822.50px;height:13px;line-height:13px;font-size:13px;font-weight:bold;color:#111;letter-spacing:0.55px;white-space:nowrap;">Coloring</div><div style="position:absolute;left:8px;top:836.5px;width:395px;height:1px;background:#c6c6c6"></div><div style="position:absolute;left:8.5px;top:843px;width:180.5px;height:22.5px;background:linear-gradient(#fcfcfc,#efefef);border:1px solid #bcbcbc;border-radius:3px"></div><svg style="position:absolute;left:175px;top:851.25px" width="8" height="5" viewBox="0 0 8 5"><path d="M0 0h8l-4 4.5z" fill="#555"/></svg><div style="position:absolute;left:19.0px;top:852.25px;width:4px;height:4px;background:#e8b23a;border-radius:1px"></div><div style="position:absolute;left:32.0px;top:848.05px;height:13px;line-height:13px;font-size:13px;font-weight:normal;color:#1e1e1e;letter-spacing:0.5px;white-space:nowrap;-webkit-text-stroke:0.15px #1e1e1e;">p</div><div style="position:absolute;left:192.5px;top:843px;width:181.0px;height:22.5px;background:linear-gradient(#fcfcfc,#efefef);border:1px solid #bcbcbc;border-radius:3px"></div><svg style="position:absolute;left:359.5px;top:851.25px" width="8" height="5" viewBox="0 0 8 5"><path d="M0 0h8l-4 4.5z" fill="#cacaca"/></svg><div style="position:absolute;left:8.5px;top:868.8px;width:185.5px;height:23.200000000000045px;background:linear-gradient(#fafafa,#ececec);border:1px solid #c4c4c4;border-radius:3px"></div><svg style="position:absolute;left:79px;top:873px" width="16" height="16" viewBox="0 0 16 16"><defs><linearGradient id="edg" x1="0" y1="0" x2="1" y2="0"><stop offset="0" stop-color="#4a5aa8"/><stop offset="0.35" stop-color="#2aa0d0"/><stop offset="0.6" stop-color="#70c850"/><stop offset="1" stop-color="#f0a830"/></linearGradient></defs><rect x="1.5" y="6.5" width="11.5" height="6.5" fill="url(#edg)"/><path d="M1.5 9.8h11.5M7 6.5v6.5" stroke="#c8a050" stroke-width="0.4"/><circle cx="4.5" cy="4.8" r="3.6" fill="#9fd37f" stroke="#7a9a6a" stroke-width="0.5"/></svg><div style="position:absolute;left:96px;top:875.00px;height:13px;line-height:13px;font-size:13px;font-weight:normal;color:#1e1e1e;letter-spacing:0.6px;white-space:nowrap;-webkit-text-stroke:0.15px #1e1e1e;">Edit</div><div style="position:absolute;left:198.5px;top:868.8px;width:25.5px;height:22.700000000000045px;background:linear-gradient(#fafafa,#ececec);border:1px solid #c4c4c4;border-radius:3px"></div><div style="position:absolute;left:228.3px;top:868.8px;width:25.5px;height:22.700000000000045px;background:linear-gradient(#fafafa,#ececec);border:1px solid #c4c4c4;border-radius:3px"></div><div style="position:absolute;left:258px;top:868.8px;width:25.5px;height:22.700000000000045px;background:linear-gradient(#fafafa,#ececec);border:1px solid #c4c4c4;border-radius:3px"></div><div style="position:absolute;left:287.8px;top:868.8px;width:25.5px;height:22.700000000000045px;background:linear-gradient(#fafafa,#ececec);border:1px solid #c4c4c4;border-radius:3px"></div><div style="position:absolute;left:317.7px;top:868.8px;width:25.5px;height:22.700000000000045px;background:linear-gradient(#fafafa,#ececec);border:1px solid #c4c4c4;border-radius:3px"></div><div style="position:absolute;left:347.5px;top:868.8px;width:25.5px;height:22.700000000000045px;background:linear-gradient(#e4e4e4,#dadada);border:1px solid #c4c4c4;border-radius:3px"></div><div style="position:absolute;left:377.4px;top:868.8px;width:25.5px;height:22.700000000000045px;background:linear-gradient(#fafafa,#ececec);border:1px solid #c4c4c4;border-radius:3px"></div><svg style="position:absolute;left:203.3px;top:872.5px" width="16" height="16" viewBox="0 0 16 16"><rect x="3" y="7" width="11" height="8" fill="#3a8ac8"/><rect x="9" y="7" width="5" height="8" fill="#e8b030"/><path d="M4 10c-2-2 0-5 2-4M8 3c2-1 4 1 3 3l-2 2" fill="none" stroke="#111" stroke-width="1.8"/></svg><svg style="position:absolute;left:233px;top:872.5px" width="16" height="16" viewBox="0 0 16 16"><path d="M2 5l3.5-3v2h5v-2l3.5 3l-3.5 3v-2h-5v2z" fill="#a3d48c" stroke="#7f9a6e" stroke-width="0.5"/><path d="M2 9v5M2 11.5h12M14 9v5M6 10v3M10 10v3" stroke="#9a9a88" stroke-width="0.8"/></svg><svg style="position:absolute;left:262.8px;top:872.5px" width="16" height="16" viewBox="0 0 16 16"><path d="M2 5l3.5-3v2h5v-2l3.5 3l-3.5 3v-2h-5v2z" fill="#a3d48c" stroke="#7f9a6e" stroke-width="0.5"/><path d="M2 9v5M2 11.5h12M14 9v5M6 10v3M10 10v3" stroke="#9a9a88" stroke-width="0.8"/><text x="10" y="15" font-family="Liberation Sans" font-weight="bold" font-size="8" fill="#111">c</text></svg><svg style="position:absolute;left:292.6px;top:872.5px" width="16" height="16" viewBox="0 0 16 16"><path d="M2 5l3.5-3v2h5v-2l3.5 3l-3.5 3v-2h-5v2z" fill="#a3d48c" stroke="#7f9a6e" stroke-width="0.5"/><path d="M2 9v5M2 11.5h12M14 9v5M6 10v3M10 10v3" stroke="#9a9a88" stroke-width="0.8"/><text x="10" y="15" font-family="Liberation Sans" font-weight="bold" font-size="8" fill="#111">t</text></svg><svg style="position:absolute;left:322.5px;top:872.5px" width="16" height="16" viewBox="0 0 16 16"><path d="M1.5 13V3.5h4l1.5 1.5h6v8z" fill="#f6d865" stroke="#b8975a" stroke-width="0.7"/><path d="M9 14.5l-4-4c-1.5-1.5 0-4 2-3l2 1.5l2-1.5c2-1 3.5 1.5 2 3z" fill="#e02828"/></svg><svg style="position:absolute;left:352.3px;top:872.5px" width="16" height="16" viewBox="0 0 16 16"><defs><linearGradient id="cbg2" x1="0" y1="0" x2="0" y2="1"><stop offset="0" stop-color="#f4a13a"/><stop offset="0.3" stop-color="#e8d23a"/><stop offset="0.5" stop-color="#6cc04a"/><stop offset="0.7" stop-color="#2aa8d8"/><stop offset="1" stop-color="#5a3c9a"/></linearGradient></defs><rect x="5.5" y="2" width="6" height="12" fill="url(#cbg2)" stroke="#8a8a8a" stroke-width="0.6"/></svg><svg style="position:absolute;left:382.2px;top:872.5px" width="16" height="16" viewBox="0 0 16 16"><defs><linearGradient id="cbg3" x1="0" y1="0" x2="0" y2="1"><stop offset="0" stop-color="#f06a20"/><stop offset="0.5" stop-color="#f0d030"/><stop offset="1" stop-color="#2a60c0"/></linearGradient></defs><rect x="3" y="1.5" width="6" height="13" fill="url(#cbg3)"/><text x="6" y="15" font-family="Liberation Serif" font-style="italic" font-weight="bold" font-size="12" fill="#111">e</text></svg><div style="position:absolute;left:8.5px;top:901.50px;height:13px;line-height:13px;font-size:13px;font-weight:bold;color:#111;letter-spacing:0.55px;white-space:nowrap;">Styling</div><div style="position:absolute;left:8px;top:916px;width:395px;height:1px;background:#c6c6c6"></div><div style="position:absolute;left:8.5px;top:924.50px;height:13px;line-height:13px;font-size:13px;font-weight:normal;color:#1e1e1e;letter-spacing:0.55px;white-space:nowrap;-webkit-text-stroke:0.15px #1e1e1e;">Opacity</div><div style="position:absolute;left:111.5px;top:931px;width:141px;height:4.5px;background:#3a95d0;border-radius:3px"></div><div style="position:absolute;left:242px;top:927.5px;width:12px;height:12px;background:linear-gradient(#fdfdfd,#eaeaea);border:1px solid #aaaaaa;border-radius:3px"></div><div style="position:absolute;left:260px;top:923px;width:142.5px;height:24px;background:#fff;border:1px solid #c0c0c0;border-bottom:none;border-radius:3px 3px 0 0"></div><div style="position:absolute;left:263px;top:929.00px;height:13px;line-height:13px;font-size:13px;font-weight:normal;color:#1e1e1e;letter-spacing:0.5px;white-space:nowrap;-webkit-text-stroke:0.15px #1e1e1e;">1</div><div style="position:absolute;left:0px;top:942px;width:403px;height:5px;background:#efefef"></div><div style="position:absolute;left:426px;top:161px;width:5px;height:786px;background:#efefef"></div><div style="position:absolute;left:431px;top:161px;width:969px;height:28px;background:#efefef"></div><div style="position:absolute;left:550.5px;top:164.5px;width:29px;height:23.5px;background:#e8e8e8;border:1px solid #c4c4c4;border-radius:3px 3px 0 0"></div><div style="position:absolute;left:431.5px;top:162.5px;width:119px;height:27px;background:#fafafa;border:1px solid #cacaca;border-bottom:none;border-radius:3px 3px 0 0"></div><div style="position:absolute;left:579.5px;top:187px;width:820.5px;height:1px;background:#c8c8c8"></div><svg style="position:absolute;left:441px;top:169px" width="16" height="15" viewBox="0 0 16 15"><rect x="1" y="1" width="14" height="13" fill="#fff" stroke="#2a2a2a" stroke-width="1.6"/><rect x="0.5" y="0.5" width="15" height="3.5" fill="#2a2a2a"/></svg><div style="position:absolute;left:460.6px;top:170.20px;height:13px;line-height:13px;font-size:13px;font-weight:normal;color:#1e1e1e;letter-spacing:0.6px;white-space:nowrap;-webkit-text-stroke:0.15px #1e1e1e;">Layout #1</div><svg style="position:absolute;left:527px;top:171px" width="11" height="11" viewBox="0 0 11 11"><rect x="0.5" y="0.5" width="10" height="10" rx="2" fill="none" stroke="#8a8a8a"/><path d="M3.2 3.2l4.6 4.6M7.8 3.2l-4.6 4.6" stroke="#4a4a4a" stroke-width="1.5"/></svg><div style="position:absolute;left:265px;width:600px;text-align:center;top:170.15px;height:14px;line-height:14px;font-size:14px;font-weight:normal;color:#222;letter-spacing:0px;white-space:nowrap;-webkit-text-stroke:0.15px #222;">+</div><div style="position:absolute;left:431px;top:189px;width:969px;height:24px;background:#f0f0f0"></div><svg style="position:absolute;left:434.5px;top:190.5px" width="20" height="20" viewBox="0 0 20 20"><defs><radialGradient id="lens"><stop offset="0" stop-color="#e8f6ff"/><stop offset="0.6" stop-color="#a8d4f0"/><stop offset="1" stop-color="#7a9ab0"/></radialGradient></defs><rect x="2.5" y="4.5" width="14.5" height="10.5" rx="3" fill="#d2d2d2" stroke="#9a9a9a" stroke-width="0.9"/><rect x="6" y="3" width="6" height="2.5" rx="1" fill="#c4c4c4" stroke="#a4a4a4" stroke-width="0.6"/><circle cx="4.8" cy="6.5" r="0.8" fill="#e04040"/><circle cx="9.8" cy="9.8" r="3.6" fill="url(#lens)" stroke="#8a9aa8" stroke-width="0.8"/><path d="M3 17l1.5-4.5l2.5 2.5c2-2 6-1.5 6 2c0 1-1 2-2 2.5l-1-1.5c1-.5 1-2-.5-2c-1 0-2 .3-2.5 1l2 2z" fill="#e02828"/></svg><svg style="position:absolute;left:458.3px;top:190.5px" width="20" height="20" viewBox="0 0 20 20"><rect x="2.5" y="4.5" width="14.5" height="10.5" rx="3" fill="#e6e6e6" stroke="#c8c8c8" stroke-width="0.9"/><rect x="6" y="3" width="6" height="2.5" rx="1" fill="#dedede" stroke="#cccccc" stroke-width="0.6"/><circle cx="9.8" cy="9.8" r="3.4" fill="#ececec" stroke="#c4c4c4" stroke-width="0.9"/><path d="M8 17.5c1-2.5 4.5-2.5 5.5-1l1-1.5v3.5h-3.5l1-1c-1-.8-2.8-.8-3.5 0z" fill="#d4d4d4"/></svg><div style="position:absolute;left:483.5px;top:192px;width:1px;height:17px;background:#d8d8d8"></div><svg style="position:absolute;left:488.3px;top:190.5px" width="20" height="20" viewBox="0 0 20 20"><path d="M1 5V1h4M15 1h4v4M19 15v4h-4M5 19H1v-4" fill="none" stroke="#9a9a9a" stroke-width="1"/><defs><radialGradient id="lens"><stop offset="0" stop-color="#e8f6ff"/><stop offset="0.6" stop-color="#a8d4f0"/><stop offset="1" stop-color="#7a9ab0"/></radialGradient></defs><rect x="2.5" y="4.5" width="14.5" height="10.5" rx="3" fill="#d2d2d2" stroke="#9a9a9a" stroke-width="0.9"/><rect x="6" y="3" width="6" height="2.5" rx="1" fill="#c4c4c4" stroke="#a4a4a4" stroke-width="0.6"/><circle cx="4.8" cy="6.5" r="0.8" fill="#e04040"/><circle cx="9.8" cy="9.8" r="3.6" fill="url(#lens)" stroke="#8a9aa8" stroke-width="0.8"/></svg><div style="position:absolute;left:513px;top:192px;width:1px;height:17px;background:#d8d8d8"></div><div style="position:absolute;left:228.29999999999995px;width:600px;text-align:center;top:195.69px;height:11px;line-height:11px;font-size:11px;font-weight:bold;color:#646850;letter-spacing:0.2px;white-space:nowrap;">3D</div><svg style="position:absolute;left:542.5px;top:190.5px" width="20" height="20" viewBox="0 0 20 20"><defs><radialGradient id="lens"><stop offset="0" stop-color="#e8f6ff"/><stop offset="0.6" stop-color="#a8d4f0"/><stop offset="1" stop-color="#7a9ab0"/></radialGradient></defs><rect x="2.5" y="4.5" width="14.5" height="10.5" rx="3" fill="#d2d2d2" stroke="#9a9a9a" stroke-width="0.9"/><rect x="6" y="3" width="6" height="2.5" rx="1" fill="#c4c4c4" stroke="#a4a4a4" stroke-width="0.6"/><circle cx="4.8" cy="6.5" r="0.8" fill="#e04040"/><circle cx="9.8" cy="9.8" r="3.6" fill="url(#lens)" stroke="#8a9aa8" stroke-width="0.8"/><path d="M11 11l6 6" stroke="#d8a820" stroke-width="2.6" stroke-linecap="round"/><path d="M11 11l6 6" stroke="#f5d040" stroke-width="1.2" stroke-linecap="round"/></svg><div style="position:absolute;left:567.5px;top:192px;width:1px;height:17px;background:#d8d8d8"></div><svg style="position:absolute;left:572.5px;top:190.5px" width="20" height="20" viewBox="0 0 20 20"><rect x="2.5" y="2.5" width="15" height="15" fill="none" stroke="#8a8a8a" stroke-dasharray="2 2"/><path d="M10 5.5v9M5.5 10h9" stroke="#7ec05a" stroke-width="3.2"/></svg><svg style="position:absolute;left:596.5px;top:190.5px" width="20" height="20" viewBox="0 0 20 20"><rect x="2.5" y="2.5" width="15" height="15" fill="none" stroke="#8a8a8a" stroke-dasharray="2 2"/><path d="M5.5 10h9" stroke="#e02828" stroke-width="3"/></svg><svg style="position:absolute;left:620.8px;top:190.5px" width="20" height="20" viewBox="0 0 20 20"><rect x="2.5" y="2.5" width="15" height="15" fill="none" stroke="#8a8a8a" stroke-dasharray="2 2"/><path d="M9 3.5v6M6 6.5h6" stroke="#7ec05a" stroke-width="2.6"/><path d="M5 13h7" stroke="#e02828" stroke-width="2.4"/><path d="M13.5 13.5l4.5 4.5" stroke="#444" stroke-width="1.4"/><path d="M13 13l3.6 0.6l-3 3z" fill="#333"/></svg><div style="position:absolute;left:646px;top:192px;width:1px;height:17px;background:#d8d8d8"></div><svg style="position:absolute;left:650.3px;top:190.5px" width="20" height="20" viewBox="0 0 20 20"><rect x="2.5" y="2.5" width="15" height="15" fill="none" stroke="#8a8a8a" stroke-dasharray="2 2"/><path d="M9.5 5l5 8.5h-10z" fill="#9fd37f" stroke="#6a9a5a" stroke-width="0.7"/><path d="M13.5 13.5l4.5 4.5" stroke="#444" stroke-width="1.4"/><path d="M14 14l3.6 0.6l-3 3z" fill="#333"/></svg><svg style="position:absolute;left:674.4px;top:190.5px" width="20" height="20" viewBox="0 0 20 20"><rect x="2.5" y="2.5" width="15" height="15" fill="none" stroke="#8a8a8a" stroke-dasharray="2 2"/><path d="M10 4.5l5 8.5h-10z" fill="none" stroke="#bbb" stroke-width="0.6"/><circle cx="10" cy="4.5" r="1.3" fill="#c83a2a"/><circle cx="5" cy="13" r="1.3" fill="#c83a2a"/><path d="M13.5 13.5l4.5 4.5" stroke="#444" stroke-width="1.4"/><path d="M14 14l3.6 0.6l-3 3z" fill="#333"/></svg><svg style="position:absolute;left:699px;top:190.5px" width="20" height="20" viewBox="0 0 20 20"><path d="M1 4V1h4M15 1h4v3M1 16v3h4" fill="none" stroke="#9a9a9a" stroke-dasharray="1.5 1.5"/><path d="M3 8l3-4h11v6l-3 4h-11z" fill="#8ccc6a" stroke="#5a8a4a" stroke-width="0.8"/><path d="M3 8h11v6M14 8l3-4" fill="none" stroke="#5a8a4a" stroke-width="0.6"/><path d="M13.5 13.5l4.5 4.5" stroke="#444" stroke-width="1.4"/><path d="M11 16l3.6 0.6l-3 3z" fill="#333"/></svg><svg style="position:absolute;left:723.3px;top:190.5px" width="20" height="20" viewBox="0 0 20 20"><path d="M3 6l3-3h11v8l-3 3h-11z M3 6h11v8 M14 6l3-3" fill="none" stroke="#aaa" stroke-width="0.6" stroke-dasharray="1.5 1"/><circle cx="5" cy="8" r="1.1" fill="#d04030"/><circle cx="8" cy="8" r="1.1" fill="#d04030"/><circle cx="5" cy="11" r="1.1" fill="#d04030"/><circle cx="8" cy="11" r="1.1" fill="#d04030"/><circle cx="12" cy="4" r="1.1" fill="#d04030"/><circle cx="16" cy="6" r="1.1" fill="#d04030"/><circle cx="11" cy="7" r="1.1" fill="#d04030"/><path d="M13.5 13.5l4.5 4.5" stroke="#444" stroke-width="1.4"/><path d="M12 16l3.6 0.6l-3 3z" fill="#333"/></svg><svg style="position:absolute;left:747.3px;top:190.5px" width="20" height="20" viewBox="0 0 20 20"><path d="M5 17l-2-2M17 3l2 2M17 17v2M3 3h3" stroke="#999" stroke-width="0.7"/><path d="M4 10l9-5v10z" fill="#9fd37f" stroke="#6a9a5a" stroke-width="0.6"/><path d="M13 5l4 -2v10l-4 2" fill="none" stroke="#aaa" stroke-width="0.6" stroke-dasharray="1 1"/></svg><svg style="position:absolute;left:771px;top:190.5px" width="20" height="20" viewBox="0 0 20 20"><path d="M2 4h4M14 4h4M2 16v2M18 16v2" stroke="#aaa" stroke-width="0.6" stroke-dasharray="1 1"/><circle cx="4" cy="7" r="1.4" fill="#c8402a"/><circle cx="8" cy="5" r="1.4" fill="#c8402a"/><circle cx="13" cy="6" r="1.4" fill="#c8402a"/><circle cx="6" cy="10" r="1.4" fill="#c8402a"/><circle cx="10" cy="9" r="1.4" fill="#c8402a"/><circle cx="14" cy="11" r="1.4" fill="#c8402a"/><circle cx="8" cy="13" r="1.4" fill="#c8402a"/><circle cx="12" cy="14" r="1.4" fill="#c8402a"/><circle cx="16" cy="15" r="1.4" fill="#c8402a"/></svg><svg style="position:absolute;left:796px;top:190.5px" width="20" height="20" viewBox="0 0 20 20"><rect x="2.5" y="2.5" width="15" height="15" fill="none" stroke="#8a8a8a" stroke-dasharray="2 2"/><circle cx="6" cy="6" r="2.4" fill="#2b8fd8"/><circle cx="6" cy="14" r="2.4" fill="#2b8fd8"/><circle cx="12" cy="10" r="3.3" fill="#9fd37f" stroke="#555" stroke-width="1"/><path d="M14.5 12.5l4 4" stroke="#333" stroke-width="1.6"/></svg><svg style="position:absolute;left:820.3px;top:190.5px" width="20" height="20" viewBox="0 0 20 20"><path d="M3 6l3-3h9v11l-3 3h-9z" fill="#d8d8d8" stroke="#aaa" stroke-width="0.8"/><path d="M3 6h9v11M12 6l3-3" fill="none" stroke="#bbb" stroke-width="0.6"/><path d="M13.5 13.5l4.5 4.5" stroke="#777" stroke-width="1.4"/><path d="M13 13l3.6 0.6l-3 3z" fill="#777"/></svg><svg style="position:absolute;left:846.2px;top:190.5px" width="20" height="20" viewBox="0 0 20 20"><circle cx="8" cy="8" r="2.3" fill="none" stroke="#bbb" stroke-width="0.8"/><path d="M11 11l5 5" stroke="#888" stroke-width="1.2"/><path d="M10.5 10.5l3.5 0.3l-3.2 3.2z" fill="#888"/></svg><svg style="position:absolute;left:870px;top:190.5px" width="20" height="20" viewBox="0 0 20 20"><path d="M10 5.2l5.8 11.6h-11.6z" fill="#9fd37f" stroke="#6a9a5a" stroke-width="0.7"/><path d="M14.5 14.5l3.8 3.8" stroke="#333" stroke-width="1.3"/><path d="M13.2 13.2l3.2 .5l-2.7 2.7z" fill="#333"/></svg><svg style="position:absolute;left:893.3px;top:190.5px" width="20" height="20" viewBox="0 0 20 20"><path d="M10 4.5l5.5 9.5h-11z" fill="none" stroke="#c4c4c4" stroke-width="0.6"/><circle cx="10" cy="4.5" r="1.3" fill="#c83a2a"/><circle cx="4.5" cy="14" r="1.3" fill="#c83a2a"/><path d="M14.5 14.5l3.8 3.8" stroke="#333" stroke-width="1.3"/><path d="M13.2 13.2l3.2 .5l-2.7 2.7z" fill="#333"/></svg><svg style="position:absolute;left:917px;top:190.5px" width="20" height="20" viewBox="0 0 20 20"><path d="M6.5 11l4.2 7.2h-8.4z" fill="#9fd37f" stroke="#6a9a5a" stroke-width="0.7"/><text x="9" y="15.5" font-family="Liberation Sans" font-size="16" fill="#6a6a58" transform="rotate(0.01)">?</text></svg><svg style="position:absolute;left:941.5px;top:190.5px" width="20" height="20" viewBox="0 0 20 20"><circle cx="5.5" cy="16.5" r="2.1" fill="#d83a2a"/><text x="8.5" y="15.5" font-family="Liberation Sans" font-size="16" fill="#6a6a58" transform="rotate(0.01)">?</text></svg><svg style="position:absolute;left:965.5px;top:190.5px" width="20" height="20" viewBox="0 0 20 20"><path d="M10 3.5v13M3.5 10h13" stroke="#2b8fd8" stroke-width="4.2"/></svg><svg style="position:absolute;left:989.8px;top:190.5px" width="20" height="20" viewBox="0 0 20 20"><path d="M3 10h14" stroke="#a8a8a8" stroke-width="4.2"/></svg><svg style="position:absolute;left:1014px;top:190.5px" width="20" height="20" viewBox="0 0 20 20"><circle cx="10" cy="10.5" r="6.6" fill="#fff" stroke="#d01030" stroke-width="2.6"/><path d="M6 6.5l8 8" stroke="#d01030" stroke-width="2.4"/></svg><div style="position:absolute;left:1199px;top:195.00px;height:13px;line-height:13px;font-size:13px;font-weight:bold;color:#111;letter-spacing:0.65px;white-space:nowrap;">RenderView1</div><div style="position:absolute;left:1199px;top:207.3px;width:88.5px;height:1.2px;background:#111"></div><div style="position:absolute;left:1298.6px;top:189.3px;width:23px;height:22.5px;background:linear-gradient(#fafafa,#ececec);border:1px solid #c6c6c6;border-radius:3px"></div><div style="position:absolute;left:1323.4px;top:189.3px;width:23px;height:22.5px;background:linear-gradient(#fafafa,#ececec);border:1px solid #c6c6c6;border-radius:3px"></div><div style="position:absolute;left:1349px;top:189.3px;width:23px;height:22.5px;background:linear-gradient(#fafafa,#ececec);border:1px solid #c6c6c6;border-radius:3px"></div><div style="position:absolute;left:1374.2px;top:189.3px;width:23px;height:22.5px;background:linear-gradient(#fafafa,#ececec);border:1px solid #c6c6c6;border-radius:3px"></div><svg style="position:absolute;left:1302px;top:193px" width="16" height="16" viewBox="0 0 16 16"><rect x="1.5" y="2.5" width="13" height="11" fill="#cfd8ee" stroke="#9a9a9a" stroke-width="0.8"/><path d="M8 2.5v11" stroke="#9a9a9a" stroke-width="0.8"/></svg><svg style="position:absolute;left:1327px;top:193px" width="16" height="16" viewBox="0 0 16 16"><rect x="1.5" y="2.5" width="13" height="11" fill="#cfd8ee" stroke="#9a9a9a" stroke-width="0.8"/><path d="M1.5 8h13" stroke="#9a9a9a" stroke-width="0.8"/></svg><svg style="position:absolute;left:1351px;top:191px" width="20" height="19" viewBox="0 0 20 19"><rect x="1.8" y="2" width="15.6" height="15.6" fill="#f4f4f4" stroke="#333" stroke-width="1.4"/><rect x="1.1" y="1.3" width="17" height="4.6" fill="#333"/></svg><svg style="position:absolute;left:1378px;top:194px" width="15" height="14" viewBox="0 0 15 14"><rect x="2.5" y="2.5" width="10" height="9" rx="1.5" fill="none" stroke="#666"/><path d="M5 4.8l5 4.5M10 4.8l-5 4.5" stroke="#333" stroke-width="1.3"/></svg><div style="position:absolute;left:431px;top:213px;width:969px;height:734px;background:#efefef"></div><div style="position:absolute;left:430px;top:161px;width:1px;height:786px;background:#c4c4c4"></div><div style="position:absolute;left:432px;top:213px;width:966px;height:734px;background:#0000ff"></div><div style="position:absolute;left:432px;top:946px;width:966px;height:1px;background:#8a8aff"></div><div style="position:absolute;left:434px;top:215px;width:962px;height:731px;background:#c4c6d4"></div><div style="position:absolute;left:435px;top:216px;width:960px;height:729px;background:#52576e"></div><div style="position:absolute;left:1282.3px;top:228.2px;width:14.5px;height:240px;background:linear-gradient(rgb(144,13,0) 0%,rgb(155,15,0) 5%,rgb(184,32,8) 10%,rgb(217,59,16) 15%,rgb(244,92,23) 20%,rgb(255,128,29) 25%,rgb(255,163,35) 30%,rgb(249,194,41) 35%,rgb(223,220,50) 40%,rgb(189,239,62) 45%,rgb(150,250,80) 50%,rgb(111,254,103) 55%,rgb(78,249,131) 60%,rgb(53,235,162) 65%,rgb(39,215,195) 70%,rgb(38,189,225) 75%,rgb(47,158,245) 80%,rgb(62,123,247) 85%,rgb(73,88,221) 90%,rgb(70,54,153) 95%,rgb(35,23,27) 100%)"></div><div style="position:absolute;left:1295px;top:227px;width:10.5px;height:1px;background:#f4f4f4"></div><div style="position:absolute;left:1310.5px;top:220.95px;height:14px;line-height:14px;font-size:14px;font-weight:normal;color:#f2f2f2;letter-spacing:0.35px;white-space:nowrap;">5.1e+01</div><div style="position:absolute;left:1295px;top:269px;width:10.5px;height:1px;background:#f4f4f4"></div><div style="position:absolute;left:1310.5px;top:263.05px;height:14px;line-height:14px;font-size:14px;font-weight:normal;color:#f2f2f2;letter-spacing:0.35px;white-space:nowrap;">0</div><div style="position:absolute;left:1295px;top:312px;width:10.5px;height:1px;background:#f4f4f4"></div><div style="position:absolute;left:1310.5px;top:305.35px;height:14px;line-height:14px;font-size:14px;font-weight:normal;color:#f2f2f2;letter-spacing:0.35px;white-space:nowrap;">-50</div><div style="position:absolute;left:1295px;top:353px;width:10.5px;height:1px;background:#f4f4f4"></div><div style="position:absolute;left:1310.5px;top:346.75px;height:14px;line-height:14px;font-size:14px;font-weight:normal;color:#f2f2f2;letter-spacing:0.35px;white-space:nowrap;">-100</div><div style="position:absolute;left:1295px;top:395px;width:10.5px;height:1px;background:#f4f4f4"></div><div style="position:absolute;left:1310.5px;top:388.35px;height:14px;line-height:14px;font-size:14px;font-weight:normal;color:#f2f2f2;letter-spacing:0.35px;white-space:nowrap;">-150</div><div style="position:absolute;left:1295px;top:436px;width:10.5px;height:1px;background:#f4f4f4"></div><div style="position:absolute;left:1310.5px;top:429.45px;height:14px;line-height:14px;font-size:14px;font-weight:normal;color:#f2f2f2;letter-spacing:0.35px;white-space:nowrap;">-200</div><div style="position:absolute;left:1295px;top:467px;width:10.5px;height:1px;background:#f4f4f4"></div><div style="position:absolute;left:1310.5px;top:460.75px;height:14px;line-height:14px;font-size:14px;font-weight:normal;color:#f2f2f2;letter-spacing:0.35px;white-space:nowrap;">-2.4e+02</div><div style="position:absolute;left:1373.5px;top:335.7px;width:16px;height:16px;font-size:16px;line-height:16px;color:#f2f2f2;transform:rotate(-90deg);">p</div><svg style="position:absolute;left:760px;top:520px" width="310" height="132" viewBox="0 0 310 132"><defs>
<clipPath id="sil"><ellipse cx="155" cy="66" rx="137" ry="50" transform="rotate(3 155 66)"/></clipPath>
<linearGradient id="band" x1="0" y1="0" x2="1" y2="0"><stop offset="0" stop-color="#58b838"/><stop offset="0.5" stop-color="#68cc3c"/><stop offset="0.68" stop-color="#9cd838"/><stop offset="0.8" stop-color="#d8b830"/><stop offset="0.9" stop-color="#d06818"/><stop offset="1" stop-color="#b83c10"/></linearGradient>
<radialGradient id="top" gradientUnits="userSpaceOnUse" cx="215" cy="0" r="250" gradientTransform="translate(215 0) scale(1 0.45) translate(-215 0)">
<stop offset="0" stop-color="#bc420e"/><stop offset="0.35" stop-color="#c6500f"/><stop offset="0.58" stop-color="#d06618"/><stop offset="0.75" stop-color="#d68020"/><stop offset="0.88" stop-color="#dca42c"/><stop offset="0.97" stop-color="#d8c030"/><stop offset="1" stop-color="#b8d038"/></radialGradient>
<filter id="soft" x="-10%" y="-20%" width="120%" height="140%"><feGaussianBlur stdDeviation="1.8"/></filter>
<filter id="soft2" x="-10%" y="-20%" width="120%" height="140%"><feGaussianBlur stdDeviation="0.9"/></filter>
</defs>
<g clip-path="url(#sil)">
<rect x="0" y="0" width="310" height="132" fill="#6a2210"/>
<g filter="url(#soft2)"><ellipse cx="154.5" cy="62.8" rx="136.5" ry="49" transform="rotate(3 155 66)" fill="url(#band)"/></g>
<g filter="url(#soft)"><ellipse cx="156.5" cy="58.5" rx="136" ry="46.5" transform="rotate(3 155 66)" fill="url(#top)"/></g>
</g></svg><svg style="position:absolute;left:500px;top:800px" width="80" height="60" viewBox="0 0 80 60"><path d="M25.6 53.2L15.5 17" stroke="#20c820" stroke-width="1.3"/><path d="M13.3 7.9L12 18.5L18.5 17.5z" fill="#10e010"/>
<path d="M25.6 53.2L11 42.7" stroke="#c8b030" stroke-width="1.2"/><circle cx="10.8" cy="42.7" r="3" fill="#e8e020"/>
<path d="M25.6 53.2L62 38.5" stroke="#b82020" stroke-width="1.4"/><path d="M68.1 36.7L59 36.3L62 42.5z" fill="#c00808"/>
<text x="18.8" y="18.4" font-family="Liberation Sans" font-size="16.5" fill="#fff">Z</text>
<text x="12" y="43.4" font-family="Liberation Sans" font-size="14.5" fill="#fff">Y</text>
<text x="62.8" y="40.5" font-family="Liberation Sans" font-size="16" fill="#fff">X</text></svg><div style="position:absolute;left:28px;top:159px;width:73px;height:22px;background:#fefcdc;border:1px solid #303030"></div><div style="position:absolute;left:32.8px;top:164.10px;height:13px;line-height:13px;font-size:13px;font-weight:normal;color:#1e1e1e;letter-spacing:0.6px;white-space:nowrap;-webkit-text-stroke:0.15px #1e1e1e;">Calculator</div><div style="position:absolute;left:3.3px;top:125px;width:42.5px;height:39px;border:4.6px solid #e8141c"></div>
</body></html>
